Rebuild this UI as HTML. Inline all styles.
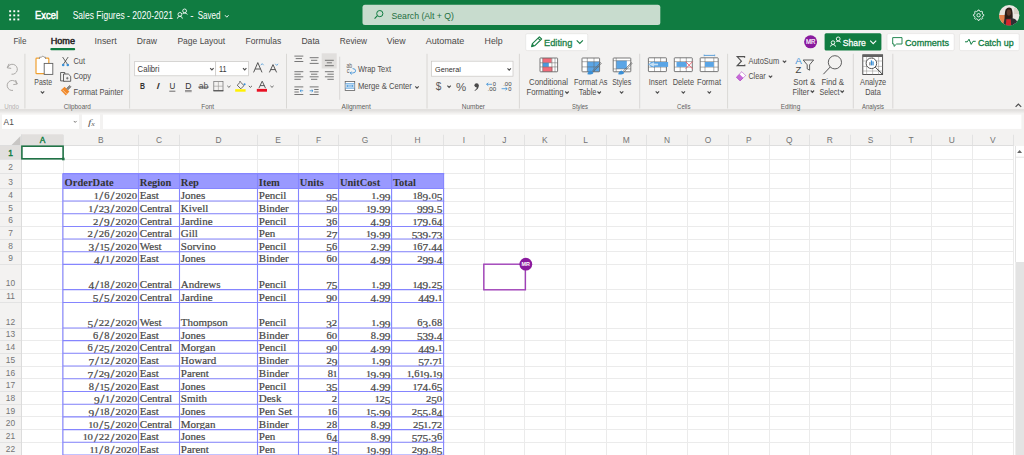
<!DOCTYPE html>
<html><head><meta charset="utf-8"><title>Sales Figures - 2020-2021 - Excel</title>
<style>
html,body{margin:0;padding:0;width:1024px;height:455px;overflow:hidden;background:#f3f2f1;font-family:"Liberation Sans",sans-serif;}
svg{display:block;}
</style></head><body>
<svg width="1024" height="455" viewBox="0 0 1024 455"><rect x="0" y="0" width="1024" height="455" fill="#f3f2f1"/>
<rect x="0" y="0" width="1024" height="30" fill="#107c41"/>
<rect x="9.2" y="10.3" width="1.9" height="1.9" fill="#ffffff"/>
<rect x="9.2" y="14.4" width="1.9" height="1.9" fill="#ffffff"/>
<rect x="9.2" y="18.5" width="1.9" height="1.9" fill="#ffffff"/>
<rect x="13.299999999999999" y="10.3" width="1.9" height="1.9" fill="#ffffff"/>
<rect x="13.299999999999999" y="14.4" width="1.9" height="1.9" fill="#ffffff"/>
<rect x="13.299999999999999" y="18.5" width="1.9" height="1.9" fill="#ffffff"/>
<rect x="17.4" y="10.3" width="1.9" height="1.9" fill="#ffffff"/>
<rect x="17.4" y="14.4" width="1.9" height="1.9" fill="#ffffff"/>
<rect x="17.4" y="18.5" width="1.9" height="1.9" fill="#ffffff"/>
<text x="35.00" y="19.30" font-family="Liberation Sans" font-size="10.6" fill="#ffffff" font-weight="normal" text-anchor="start" textLength="23.00" lengthAdjust="spacingAndGlyphs" stroke="#ffffff" stroke-width="0.5">Excel</text>
<text x="72.70" y="19.00" font-family="Liberation Sans" font-size="10.2" fill="#ffffff" font-weight="normal" text-anchor="start" textLength="100.20" lengthAdjust="spacingAndGlyphs">Sales Figures - 2020-2021</text>
<g fill="none" stroke="#ffffff" stroke-width="0.85"><circle cx="179.9" cy="14.4" r="1.9"/><path d="M177.4 18.6 Q177.6 16.3 179.9 16.3 Q182.2 16.3 182.4 18.6"/><circle cx="184.6" cy="10.9" r="1.9"/><path d="M182.6 13.5 Q184.6 12.6 186.6 13.5 L187.3 14.6"/></g>
<text x="190.20" y="19.00" font-family="Liberation Sans" font-size="10.2" fill="#ffffff" font-weight="normal" text-anchor="start" textLength="3.30" lengthAdjust="spacingAndGlyphs">-</text>
<text x="197.70" y="19.00" font-family="Liberation Sans" font-size="10.2" fill="#ffffff" font-weight="normal" text-anchor="start" textLength="22.80" lengthAdjust="spacingAndGlyphs">Saved</text>
<path d="M225.00 15.20 L226.80 17.20 L228.60 15.20" stroke="#ffffff" fill="none" stroke-width="0.9"/>
<rect x="362.5" y="4.7" width="297.8" height="20.3" rx="2.5" fill="#c8dcce"/>
<path d="M377.2 15.8 L374.6 18.6" stroke="#107c41" fill="none" stroke-width="1.1"/>
<circle cx="379.8" cy="13.6" r="3.1" stroke="#107c41" stroke-width="1" fill="none"/>
<text x="391.50" y="19.20" font-family="Liberation Sans" font-size="9.6" fill="#1e6e3e" font-weight="normal" text-anchor="start" textLength="62.50" lengthAdjust="spacingAndGlyphs">Search (Alt + Q)</text>
<path d="M977.62 11.12 L978.03 10.03 L979.17 10.03 L979.58 11.12 L980.79 11.62 L981.85 11.14 L982.66 11.95 L982.18 13.01 L982.68 14.22 L983.77 14.63 L983.77 15.77 L982.68 16.18 L982.18 17.39 L982.66 18.45 L981.85 19.26 L980.79 18.78 L979.58 19.28 L979.17 20.37 L978.03 20.37 L977.62 19.28 L976.41 18.78 L975.35 19.26 L974.54 18.45 L975.02 17.39 L974.52 16.18 L973.43 15.77 L973.43 14.63 L974.52 14.22 L975.02 13.01 L974.54 11.95 L975.35 11.14 L976.41 11.62 Z" stroke="#ffffff" fill="none" stroke-width="0.85" stroke-linejoin="round"/>
<circle cx="978.6" cy="15.2" r="1.7" fill="none" stroke="#ffffff" stroke-width="0.85"/>
<clipPath id="av"><circle cx="1009.2" cy="15.2" r="10.2"/></clipPath>
<g clip-path="url(#av)"><rect x="998" y="4" width="23" height="23" fill="#e9e6e2"/><rect x="998" y="15" width="7" height="12" fill="#e3834f"/><rect x="1014" y="8" width="7" height="6" fill="#d8d2c8"/><path d="M1004.6 24 Q1004.2 14 1005.6 9.6 Q1008.4 6.2 1011.6 8.6 Q1013 12 1012.6 19 Z" fill="#2a1c17"/><ellipse cx="1008.8" cy="12.6" rx="2.1" ry="3.1" fill="#5e3a2c"/><path d="M1002.5 27 L1004.5 19.6 Q1008.5 17.6 1013.5 18.4 Q1017.5 19.4 1019 27 Z" fill="#2e3034"/><path d="M1005.6 27 L1006.4 19.2 L1010.8 19.2 L1011.2 27 Z" fill="#d3282e"/></g>
<text x="13.40" y="44.30" font-family="Liberation Sans" font-size="8.8" fill="#4a4948" font-weight="normal" text-anchor="start" textLength="13.00" lengthAdjust="spacingAndGlyphs">File</text>
<text x="50.70" y="44.30" font-family="Liberation Sans" font-size="8.8" fill="#252423" font-weight="normal" text-anchor="start" textLength="24.30" lengthAdjust="spacingAndGlyphs" stroke="#252423" stroke-width="0.45">Home</text>
<text x="94.60" y="44.30" font-family="Liberation Sans" font-size="8.8" fill="#4a4948" font-weight="normal" text-anchor="start" textLength="22.00" lengthAdjust="spacingAndGlyphs">Insert</text>
<text x="136.80" y="44.30" font-family="Liberation Sans" font-size="8.8" fill="#4a4948" font-weight="normal" text-anchor="start" textLength="20.10" lengthAdjust="spacingAndGlyphs">Draw</text>
<text x="177.40" y="44.30" font-family="Liberation Sans" font-size="8.8" fill="#4a4948" font-weight="normal" text-anchor="start" textLength="47.80" lengthAdjust="spacingAndGlyphs">Page Layout</text>
<text x="245.60" y="44.30" font-family="Liberation Sans" font-size="8.8" fill="#4a4948" font-weight="normal" text-anchor="start" textLength="35.60" lengthAdjust="spacingAndGlyphs">Formulas</text>
<text x="301.40" y="44.30" font-family="Liberation Sans" font-size="8.8" fill="#4a4948" font-weight="normal" text-anchor="start" textLength="18.20" lengthAdjust="spacingAndGlyphs">Data</text>
<text x="339.80" y="44.30" font-family="Liberation Sans" font-size="8.8" fill="#4a4948" font-weight="normal" text-anchor="start" textLength="27.20" lengthAdjust="spacingAndGlyphs">Review</text>
<text x="386.70" y="44.30" font-family="Liberation Sans" font-size="8.8" fill="#4a4948" font-weight="normal" text-anchor="start" textLength="18.90" lengthAdjust="spacingAndGlyphs">View</text>
<text x="425.70" y="44.30" font-family="Liberation Sans" font-size="8.8" fill="#4a4948" font-weight="normal" text-anchor="start" textLength="38.70" lengthAdjust="spacingAndGlyphs">Automate</text>
<text x="484.60" y="44.30" font-family="Liberation Sans" font-size="8.8" fill="#4a4948" font-weight="normal" text-anchor="start" textLength="18.00" lengthAdjust="spacingAndGlyphs">Help</text>
<rect x="50.3" y="48.1" width="24.9" height="2.2" rx="1.1" fill="#107c41"/>
<rect x="525.7" y="33.7" width="62" height="16.9" rx="1.5" fill="#ffffff" stroke="#e1dfdd" stroke-width="0.6"/>
<path d="M531.6 46.6 L532.4 43.6 L539.4 36.8 L541.6 39 L534.6 45.8 Z M538 38.2 L540.2 40.4" stroke="#1a7f47" fill="none" stroke-width="1.15" stroke-linejoin="round"/>
<path d="M531.6 46.6 L532.4 43.6 L534.6 45.8 Z" stroke="none" fill="#1a7f47" stroke-width="1"/>
<text x="544.00" y="45.50" font-family="Liberation Sans" font-size="9.4" fill="#1a7f47" font-weight="normal" text-anchor="start" textLength="28.40" lengthAdjust="spacingAndGlyphs" stroke="#1a7f47" stroke-width="0.3">Editing</text>
<path d="M576.70 40.30 L579.80 43.50 L582.90 40.30" stroke="#1a7f47" fill="none" stroke-width="1.15"/>
<circle cx="810.6" cy="41.8" r="6.5" fill="#8a1a9e"/>
<text x="810.60" y="44.20" font-family="Liberation Sans" font-size="6.6" fill="#ffffff" font-weight="normal" text-anchor="middle" textLength="9.40" lengthAdjust="spacingAndGlyphs" stroke="#ffffff" stroke-width="0.2">MR</text>
<rect x="824.6" y="33.2" width="56.8" height="17.4" rx="1.5" fill="#107c41"/>
<g fill="none" stroke="#ffffff" stroke-width="0.9"><circle cx="833" cy="42.6" r="1.8"/><path d="M830.4 46.6 Q830.8 44.5 833 44.5 Q835.2 44.5 835.6 46.6"/><circle cx="838.2" cy="38.9" r="1.9"/><path d="M836.3 41.5 Q838.2 40.8 840.1 41.5 L840.6 42.5"/></g>
<text x="842.80" y="45.80" font-family="Liberation Sans" font-size="9.3" fill="#ffffff" font-weight="normal" text-anchor="start" textLength="23.00" lengthAdjust="spacingAndGlyphs" stroke="#ffffff" stroke-width="0.3">Share</text>
<path d="M870.20 40.55 L873.20 43.65 L876.20 40.55" stroke="#ffffff" fill="none" stroke-width="1.1"/>
<rect x="887" y="33.6" width="67.2" height="17" rx="1.5" fill="#ffffff" stroke="#e1dfdd" stroke-width="0.6"/>
<path d="M892.7 37.6 L902 37.6 L902 44 L896.6 44 L894 46.4 L894 44 L892.7 44 Z" stroke="#107c41" fill="none" stroke-width="0.9"/>
<text x="905.00" y="45.60" font-family="Liberation Sans" font-size="9.3" fill="#107c41" font-weight="normal" text-anchor="start" textLength="44.00" lengthAdjust="spacingAndGlyphs" stroke="#107c41" stroke-width="0.3">Comments</text>
<rect x="959.5" y="33.6" width="59.7" height="17" rx="1.5" fill="#ffffff" stroke="#e1dfdd" stroke-width="0.6"/>
<path d="M965 41.8 L967.3 41.8 L969 39.2 L971.2 44.4 L973 41.3 L975.7 41.3" stroke="#107c41" fill="none" stroke-width="1"/>
<text x="978.00" y="45.60" font-family="Liberation Sans" font-size="9.3" fill="#107c41" font-weight="normal" text-anchor="start" textLength="35.60" lengthAdjust="spacingAndGlyphs" stroke="#107c41" stroke-width="0.3">Catch up</text>
<line x1="24.9" y1="53.8" x2="24.9" y2="108.5" stroke="#d2d0ce" stroke-width="0.8"/>
<line x1="129.6" y1="53.8" x2="129.6" y2="108.5" stroke="#d2d0ce" stroke-width="0.8"/>
<line x1="286.5" y1="53.8" x2="286.5" y2="108.5" stroke="#d2d0ce" stroke-width="0.8"/>
<line x1="427" y1="53.8" x2="427" y2="108.5" stroke="#d2d0ce" stroke-width="0.8"/>
<line x1="519.4" y1="53.8" x2="519.4" y2="108.5" stroke="#d2d0ce" stroke-width="0.8"/>
<line x1="639.7" y1="53.8" x2="639.7" y2="108.5" stroke="#d2d0ce" stroke-width="0.8"/>
<line x1="727.6" y1="53.8" x2="727.6" y2="108.5" stroke="#d2d0ce" stroke-width="0.8"/>
<line x1="853.3" y1="53.8" x2="853.3" y2="108.5" stroke="#d2d0ce" stroke-width="0.8"/>
<line x1="892.8" y1="53.8" x2="892.8" y2="108.5" stroke="#d2d0ce" stroke-width="0.8"/>
<line x1="339.7" y1="56.7" x2="339.7" y2="99.7" stroke="#d2d0ce" stroke-width="0.8"/>
<defs><linearGradient id="sh" x1="0" y1="0" x2="0" y2="1"><stop offset="0" stop-color="#dcdad8"/><stop offset="1" stop-color="#f3f2f1"/></linearGradient></defs>
<rect x="0" y="109.2" width="1024" height="4.4" fill="url(#sh)"/>
<text x="63.70" y="108.60" font-family="Liberation Sans" font-size="6.8" fill="#605e5c" font-weight="normal" text-anchor="start" textLength="27.10" lengthAdjust="spacingAndGlyphs">Clipboard</text>
<text x="201.30" y="108.60" font-family="Liberation Sans" font-size="6.8" fill="#605e5c" font-weight="normal" text-anchor="start" textLength="12.70" lengthAdjust="spacingAndGlyphs">Font</text>
<text x="341.60" y="108.60" font-family="Liberation Sans" font-size="6.8" fill="#605e5c" font-weight="normal" text-anchor="start" textLength="29.20" lengthAdjust="spacingAndGlyphs">Alignment</text>
<text x="461.70" y="108.60" font-family="Liberation Sans" font-size="6.8" fill="#605e5c" font-weight="normal" text-anchor="start" textLength="23.30" lengthAdjust="spacingAndGlyphs">Number</text>
<text x="572.00" y="108.60" font-family="Liberation Sans" font-size="6.8" fill="#605e5c" font-weight="normal" text-anchor="start" textLength="16.00" lengthAdjust="spacingAndGlyphs">Styles</text>
<text x="677.00" y="108.60" font-family="Liberation Sans" font-size="6.8" fill="#605e5c" font-weight="normal" text-anchor="start" textLength="13.50" lengthAdjust="spacingAndGlyphs">Cells</text>
<text x="780.70" y="108.60" font-family="Liberation Sans" font-size="6.8" fill="#605e5c" font-weight="normal" text-anchor="start" textLength="19.50" lengthAdjust="spacingAndGlyphs">Editing</text>
<text x="862.00" y="108.60" font-family="Liberation Sans" font-size="6.8" fill="#605e5c" font-weight="normal" text-anchor="start" textLength="22.00" lengthAdjust="spacingAndGlyphs">Analysis</text>
<text x="4.20" y="108.60" font-family="Liberation Sans" font-size="6.8" fill="#b5b3b1" font-weight="normal" text-anchor="start" textLength="14.80" lengthAdjust="spacingAndGlyphs">Undo</text>
<path d="M9 63.8 L7.2 67.8 L11.2 68.4 M7.6 67.6 A5 5 0 1 1 11.5 74.2" stroke="#a19f9d" fill="none" stroke-width="0.9"/>
<path d="M15.5 80 L17.3 84 L13.3 84.6 M16.9 83.8 A5 5 0 1 0 13 90.4" stroke="#a19f9d" fill="none" stroke-width="0.9"/>
<rect x="36" y="58.2" width="12.8" height="15.5" rx="0.8" fill="#ffffff" stroke="#f0a030" stroke-width="1.2"/>
<path d="M39.5 59 L39.5 57.2 L41.5 57.2 A1.3 1.3 0 0 1 44 57.2 L45.5 57.2 L45.5 59" stroke="#8a8886" fill="#ffffff" stroke-width="0.8"/>
<rect x="44.2" y="63.4" width="8.6" height="11" fill="#ffffff" stroke="#616161" stroke-width="0.9"/>
<text x="34.30" y="84.50" font-family="Liberation Sans" font-size="8.4" fill="#504e4c" font-weight="normal" text-anchor="start" textLength="17.70" lengthAdjust="spacingAndGlyphs">Paste</text>
<path d="M40.80 91.30 L42.50 93.10 L44.20 91.30" stroke="#505050" fill="none" stroke-width="1.15"/>
<path d="M62.6 57 L67.4 64.2 M68.2 57 L63.4 64.2" stroke="#424242" fill="none" stroke-width="0.8"/>
<circle cx="63.2" cy="65" r="1.3" fill="#3a8fd6"/><circle cx="67.8" cy="65" r="1.3" fill="#3a8fd6"/>
<text x="73.40" y="63.90" font-family="Liberation Sans" font-size="8.4" fill="#504e4c" font-weight="normal" text-anchor="start" textLength="11.60" lengthAdjust="spacingAndGlyphs">Cut</text>
<path d="M60.6 72.5 L64.8 72.5 L64.8 80.9 L60.6 80.9 Z" stroke="#424242" fill="none" stroke-width="0.8"/>
<path d="M63.5 74 L68.3 74 L70.7 76.3 L70.7 81.3 L63.5 81.3 Z" stroke="#424242" fill="#f3f2f1" stroke-width="0.8"/>
<path d="M66 78.2 L68.6 78.2 M67.3 76.9 L67.3 79.5" stroke="#424242" fill="none" stroke-width="0.6"/>
<text x="73.40" y="79.00" font-family="Liberation Sans" font-size="8.4" fill="#504e4c" font-weight="normal" text-anchor="start" textLength="17.60" lengthAdjust="spacingAndGlyphs">Copy</text>
<path d="M60.8 90.2 L64.6 86.8 L69.4 91.4 L65.8 95.6 Z" stroke="none" fill="#f0892b" stroke-width="1"/>
<path d="M62.6 89.8 L66.6 93.8" stroke="#fbd3a8" fill="none" stroke-width="0.8"/>
<path d="M66.4 88.6 L69.6 85.4 L71 86.8 L67.8 90" stroke="#616161" fill="#8a8886" stroke-width="0.6"/>
<text x="73.60" y="94.50" font-family="Liberation Sans" font-size="8.4" fill="#504e4c" font-weight="normal" text-anchor="start" textLength="49.60" lengthAdjust="spacingAndGlyphs">Format Painter</text>
<rect x="134.7" y="61.5" width="81" height="14.3" fill="#ffffff" stroke="#c8c6c4" stroke-width="0.7"/>
<rect x="215.7" y="61.5" width="32.8" height="14.3" fill="#ffffff" stroke="#c8c6c4" stroke-width="0.7"/>
<text x="137.60" y="72.20" font-family="Liberation Sans" font-size="8.4" fill="#3c3b3a" font-weight="normal" text-anchor="start" textLength="21.80" lengthAdjust="spacingAndGlyphs">Calibri</text>
<path d="M210.20 68.10 L211.90 69.90 L213.60 68.10" stroke="#505050" fill="none" stroke-width="1.15"/>
<text x="218.90" y="72.20" font-family="Liberation Sans" font-size="8.4" fill="#3c3b3a" font-weight="normal" text-anchor="start" textLength="7.60" lengthAdjust="spacingAndGlyphs">11</text>
<path d="M243.00 68.10 L244.70 69.90 L246.40 68.10" stroke="#505050" fill="none" stroke-width="1.15"/>
<path d="M253.6 72.4 L257.8 62.6 L262 72.4 M255.2 69 L260.4 69" stroke="#424242" fill="none" stroke-width="0.9"/>
<path d="M260.8 65.2 L262.2 63.6 L263.6 65.2" stroke="#3a8fd6" fill="none" stroke-width="0.7"/>
<path d="M269.4 72.4 L273 64.6 L276.6 72.4 M270.7 69.6 L275.3 69.6" stroke="#424242" fill="none" stroke-width="0.9"/>
<path d="M275.3 63.8 L276.7 65.4 L278.1 63.8" stroke="#3a8fd6" fill="none" stroke-width="0.7"/>
<text x="140.00" y="88.80" font-family="Liberation Sans" font-size="8.6" fill="#323130" font-weight="bold" text-anchor="start" textLength="5.00" lengthAdjust="spacingAndGlyphs">B</text>
<text x="156.30" y="88.80" font-family="Liberation Sans" font-size="8.6" fill="#323130" font-weight="normal" text-anchor="start" textLength="3.70" lengthAdjust="spacingAndGlyphs" font-style="italic">I</text>
<text x="169.50" y="88.80" font-family="Liberation Sans" font-size="8.6" fill="#323130" font-weight="normal" text-anchor="start" textLength="5.80" lengthAdjust="spacingAndGlyphs">U</text>
<line x1="169.3" y1="91.2" x2="175.4" y2="91.2" stroke="#323130" stroke-width="0.7"/>
<text x="185.30" y="88.80" font-family="Liberation Sans" font-size="8.6" fill="#323130" font-weight="normal" text-anchor="start" textLength="6.20" lengthAdjust="spacingAndGlyphs">D</text>
<line x1="185" y1="90.5" x2="191.7" y2="90.5" stroke="#323130" stroke-width="0.5"/>
<line x1="185" y1="91.7" x2="191.7" y2="91.7" stroke="#323130" stroke-width="0.5"/>
<text x="198.80" y="89.40" font-family="Liberation Sans" font-size="8.2" fill="#555555" font-weight="normal" text-anchor="start" textLength="9.60" lengthAdjust="spacingAndGlyphs">ab</text>
<line x1="198.2" y1="87.1" x2="208.7" y2="87.1" stroke="#424242" stroke-width="0.8"/>
<rect x="213.8" y="81.6" width="9.2" height="9.2" fill="none" stroke="#6e6e6e" stroke-width="0.7"/>
<line x1="218.4" y1="81.6" x2="218.4" y2="90.8" stroke="#9a9896" stroke-width="0.6"/>
<line x1="213.8" y1="86.2" x2="223" y2="86.2" stroke="#9a9896" stroke-width="0.6"/>
<line x1="213.4" y1="90.8" x2="223.4" y2="90.8" stroke="#424242" stroke-width="1.0"/>
<path d="M227.30 85.85 L228.90 87.35 L230.50 85.85" stroke="#424242" fill="none" stroke-width="0.8"/>
<path d="M237.2 85.2 L240.4 82 L244 85.6 L240.8 88.8 Z M240.4 82 L239.4 81" stroke="#424242" fill="none" stroke-width="0.8"/>
<circle cx="244.6" cy="84.3" r="1" fill="#3a8fd6"/>
<rect x="235.2" y="89.2" width="10.4" height="2.5" fill="#fff100"/>
<path d="M248.80 85.85 L250.40 87.35 L252.00 85.85" stroke="#424242" fill="none" stroke-width="0.8"/>
<path d="M258.9 88.2 L262.2 81.2 L265.5 88.2 M260 85.6 L264.4 85.6" stroke="#424242" fill="none" stroke-width="0.85"/>
<rect x="256.8" y="88.9" width="10.2" height="2.8" fill="#e81123"/>
<path d="M270.40 85.85 L272.00 87.35 L273.60 85.85" stroke="#424242" fill="none" stroke-width="0.8"/>
<rect x="321.7" y="53.3" width="15" height="15.2" fill="#e1dfdd"/>
<line x1="294.4" y1="56.1" x2="303.3" y2="56.1" stroke="#616161" stroke-width="0.85"/>
<line x1="295.7" y1="58.6" x2="302" y2="58.6" stroke="#616161" stroke-width="0.85"/>
<line x1="294.4" y1="61.5" x2="303.3" y2="61.5" stroke="#616161" stroke-width="0.85"/>
<line x1="309.7" y1="57.7" x2="318.6" y2="57.7" stroke="#616161" stroke-width="0.85"/>
<line x1="311" y1="60.3" x2="317.3" y2="60.3" stroke="#616161" stroke-width="0.85"/>
<line x1="309.7" y1="63.4" x2="318.6" y2="63.4" stroke="#616161" stroke-width="0.85"/>
<line x1="324.9" y1="60.3" x2="333.8" y2="60.3" stroke="#616161" stroke-width="0.85"/>
<line x1="326.8" y1="62.8" x2="331.9" y2="62.8" stroke="#616161" stroke-width="0.85"/>
<line x1="324.9" y1="65.7" x2="333.8" y2="65.7" stroke="#616161" stroke-width="0.85"/>
<line x1="294.4" y1="71.7" x2="303.3" y2="71.7" stroke="#616161" stroke-width="0.85"/>
<line x1="309.7" y1="71.7" x2="318.6" y2="71.7" stroke="#616161" stroke-width="0.85"/>
<line x1="324.9" y1="71.7" x2="333.8" y2="71.7" stroke="#616161" stroke-width="0.85"/>
<line x1="294.4" y1="74.2" x2="300.8" y2="74.2" stroke="#616161" stroke-width="0.85"/>
<line x1="311" y1="74.2" x2="317.3" y2="74.2" stroke="#616161" stroke-width="0.85"/>
<line x1="327.4" y1="74.2" x2="333.8" y2="74.2" stroke="#616161" stroke-width="0.85"/>
<line x1="294.4" y1="76.8" x2="303.3" y2="76.8" stroke="#616161" stroke-width="0.85"/>
<line x1="309.7" y1="76.8" x2="318.6" y2="76.8" stroke="#616161" stroke-width="0.85"/>
<line x1="324.9" y1="76.8" x2="333.8" y2="76.8" stroke="#616161" stroke-width="0.85"/>
<line x1="294.4" y1="79.3" x2="300.8" y2="79.3" stroke="#616161" stroke-width="0.85"/>
<line x1="311" y1="79.3" x2="317.3" y2="79.3" stroke="#616161" stroke-width="0.85"/>
<line x1="327.4" y1="79.3" x2="333.8" y2="79.3" stroke="#616161" stroke-width="0.85"/>
<line x1="294.4" y1="86.9" x2="303.3" y2="86.9" stroke="#616161" stroke-width="0.85"/>
<line x1="294.4" y1="89.5" x2="298.8" y2="89.5" stroke="#616161" stroke-width="0.85"/>
<line x1="294.4" y1="92" x2="298.8" y2="92" stroke="#616161" stroke-width="0.85"/>
<line x1="294.4" y1="94.5" x2="303.3" y2="94.5" stroke="#616161" stroke-width="0.85"/>
<path d="M303.2 90.75 L300 90.75 M301.3 89.5 L300 90.75 L301.3 92" stroke="#3a8fd6" fill="none" stroke-width="0.8"/>
<line x1="309.7" y1="86.9" x2="318.6" y2="86.9" stroke="#616161" stroke-width="0.85"/>
<line x1="314.2" y1="89.5" x2="318.6" y2="89.5" stroke="#616161" stroke-width="0.85"/>
<line x1="314.2" y1="92" x2="318.6" y2="92" stroke="#616161" stroke-width="0.85"/>
<line x1="309.7" y1="94.5" x2="318.6" y2="94.5" stroke="#616161" stroke-width="0.85"/>
<path d="M309.7 90.75 L313 90.75 M311.7 89.5 L313 90.75 L311.7 92" stroke="#3a8fd6" fill="none" stroke-width="0.8"/>
<text x="346.40" y="67.80" font-family="Liberation Sans" font-size="6.4" fill="#616161" font-weight="normal" text-anchor="start" textLength="5.60" lengthAdjust="spacingAndGlyphs">ab</text>
<text x="346.80" y="72.60" font-family="Liberation Sans" font-size="6.4" fill="#616161" font-weight="normal" text-anchor="start" textLength="2.80" lengthAdjust="spacingAndGlyphs">c</text>
<path d="M352.6 68.6 Q355.6 68.6 355.6 70.8 Q355.6 73 352.6 73 L350.2 73 M351.6 71.6 L350.2 73 L351.6 74.4" stroke="#3a8fd6" fill="none" stroke-width="0.85"/>
<text x="357.90" y="72.10" font-family="Liberation Sans" font-size="8.4" fill="#504e4c" font-weight="normal" text-anchor="start" textLength="33.10" lengthAdjust="spacingAndGlyphs">Wrap Text</text>
<rect x="345.2" y="81.4" width="9.5" height="9.1" fill="#ffffff" stroke="#616161" stroke-width="0.8"/>
<rect x="345.6" y="83.6" width="8.7" height="4.7" fill="#c7e0f4"/>
<line x1="345.2" y1="83.6" x2="354.7" y2="83.6" stroke="#3a8fd6" stroke-width="0.6"/>
<line x1="345.2" y1="88.3" x2="354.7" y2="88.3" stroke="#3a8fd6" stroke-width="0.6"/>
<path d="M346.8 85.95 L353.1 85.95 M348 85 L346.8 85.95 L348 86.9 M351.9 85 L353.1 85.95 L351.9 86.9" stroke="#3a8fd6" fill="none" stroke-width="0.6"/>
<text x="357.90" y="89.00" font-family="Liberation Sans" font-size="8.4" fill="#504e4c" font-weight="normal" text-anchor="start" textLength="54.00" lengthAdjust="spacingAndGlyphs">Merge &amp; Center</text>
<path d="M415.30 86.40 L417.00 88.20 L418.70 86.40" stroke="#505050" fill="none" stroke-width="1.15"/>
<rect x="431.5" y="61.2" width="81.5" height="15" fill="#ffffff" stroke="#c8c6c4" stroke-width="0.7"/>
<text x="435.00" y="71.70" font-family="Liberation Sans" font-size="7.8" fill="#323130" font-weight="normal" text-anchor="start" textLength="25.80" lengthAdjust="spacingAndGlyphs">General</text>
<path d="M507.50 68.30 L509.20 70.10 L510.90 68.30" stroke="#505050" fill="none" stroke-width="1.15"/>
<text x="435.80" y="90.20" font-family="Liberation Sans" font-size="10.6" fill="#5a5a5a" font-weight="normal" text-anchor="start" textLength="5.60" lengthAdjust="spacingAndGlyphs">$</text>
<path d="M447.40 85.60 L449.10 87.40 L450.80 85.60" stroke="#505050" fill="none" stroke-width="1.15"/>
<text x="455.90" y="90.60" font-family="Liberation Sans" font-size="10.4" fill="#5a5a5a" font-weight="normal" text-anchor="start" textLength="10.20" lengthAdjust="spacingAndGlyphs">%</text>
<circle cx="476.6" cy="85.3" r="2.15" fill="#4a4a4a"/>
<path d="M478.7 85.6 Q478.8 89.2 474.9 90.9 L474.6 90.2 Q476.8 89 476.9 87.2 Z" stroke="none" fill="#4a4a4a" stroke-width="1"/>
<text x="492.70" y="85.80" font-family="Liberation Sans" font-size="5.8" fill="#424242" font-weight="normal" text-anchor="start" textLength="3.20" lengthAdjust="spacingAndGlyphs">0</text>
<text x="487.60" y="90.60" font-family="Liberation Sans" font-size="5.8" fill="#424242" font-weight="normal" text-anchor="start" textLength="8.60" lengthAdjust="spacingAndGlyphs">.00</text>
<path d="M492 84.3 L486.6 84.3 M488.3 82.8 L486.6 84.3 L488.3 85.8" stroke="#3a8fd6" fill="none" stroke-width="0.8"/>
<text x="503.20" y="85.80" font-family="Liberation Sans" font-size="5.8" fill="#424242" font-weight="normal" text-anchor="start" textLength="8.40" lengthAdjust="spacingAndGlyphs">.00</text>
<text x="508.30" y="90.60" font-family="Liberation Sans" font-size="5.8" fill="#424242" font-weight="normal" text-anchor="start" textLength="3.20" lengthAdjust="spacingAndGlyphs">0</text>
<path d="M501.6 88.7 L507.2 88.7 M505.5 87.2 L507.2 88.7 L505.5 90.2" stroke="#3a8fd6" fill="none" stroke-width="0.8"/>
<rect x="540" y="58" width="17.6" height="13.8" rx="0.6" fill="#ffffff"/>
<rect x="542.7" y="58" width="8.9" height="4.8" fill="#f26b7a"/>
<rect x="542.7" y="62.8" width="6.1" height="4.1" fill="#4a9be0"/>
<rect x="542.7" y="66.9" width="9.7" height="4.9" fill="#f26b7a"/>
<rect x="540" y="58" width="17.6" height="13.8" rx="0.6" fill="none" stroke="#616161" stroke-width="0.85"/>
<line x1="540" y1="62.8" x2="557.6" y2="62.8" stroke="#616161" stroke-width="0.5"/>
<line x1="540" y1="66.9" x2="557.6" y2="66.9" stroke="#616161" stroke-width="0.5"/>
<line x1="542.7" y1="58" x2="542.7" y2="71.8" stroke="#616161" stroke-width="0.5"/>
<line x1="551.9" y1="58" x2="551.9" y2="71.8" stroke="#616161" stroke-width="0.5"/>
<line x1="555" y1="58" x2="555" y2="71.8" stroke="#616161" stroke-width="0.5"/>
<text x="529.00" y="84.80" font-family="Liberation Sans" font-size="8.4" fill="#504e4c" font-weight="normal" text-anchor="start" textLength="39.00" lengthAdjust="spacingAndGlyphs">Conditional</text>
<text x="526.50" y="94.80" font-family="Liberation Sans" font-size="8.4" fill="#504e4c" font-weight="normal" text-anchor="start" textLength="37.00" lengthAdjust="spacingAndGlyphs">Formatting</text>
<path d="M565.30 91.50 L567.00 93.30 L568.70 91.50" stroke="#505050" fill="none" stroke-width="1.15"/>
<rect x="582" y="58" width="17.6" height="13.8" rx="0.6" fill="#ffffff"/>
<rect x="587.3" y="61.7" width="12.3" height="10.1" fill="#5aa5e6"/>
<rect x="582" y="58" width="17.6" height="13.8" rx="0.6" fill="none" stroke="#616161" stroke-width="0.85"/>
<line x1="582" y1="61.7" x2="599.6" y2="61.7" stroke="#616161" stroke-width="0.5"/>
<line x1="582" y1="66.9" x2="599.6" y2="66.9" stroke="#616161" stroke-width="0.5"/>
<line x1="587.3" y1="58" x2="587.3" y2="71.8" stroke="#616161" stroke-width="0.5"/>
<line x1="594" y1="58" x2="594" y2="71.8" stroke="#616161" stroke-width="0.5"/>
<path d="M600.8 62.2 L592.6 71 M601.6 63 L593.4 71.8" stroke="#616161" fill="none" stroke-width="0.7"/>
<path d="M587.4 74.2 Q588 70.8 590.8 70.4 L593.6 72.8 Q592.6 75.4 587.4 74.2 Z" stroke="none" fill="#3a8fd6" stroke-width="1"/>
<text x="574.00" y="84.80" font-family="Liberation Sans" font-size="8.4" fill="#504e4c" font-weight="normal" text-anchor="start" textLength="33.50" lengthAdjust="spacingAndGlyphs">Format As</text>
<text x="578.80" y="94.80" font-family="Liberation Sans" font-size="8.4" fill="#504e4c" font-weight="normal" text-anchor="start" textLength="17.60" lengthAdjust="spacingAndGlyphs">Table</text>
<path d="M597.50 91.50 L599.20 93.30 L600.90 91.50" stroke="#505050" fill="none" stroke-width="1.15"/>
<rect x="613.2" y="58" width="17.6" height="13.8" rx="0.6" fill="#ffffff"/>
<rect x="616.2" y="60.7" width="10.6" height="8.2" fill="#5aa5e6"/>
<rect x="613.2" y="58" width="17.6" height="13.8" rx="0.6" fill="none" stroke="#616161" stroke-width="0.85"/>
<line x1="613.2" y1="60.7" x2="630.8" y2="60.7" stroke="#616161" stroke-width="0.5"/>
<line x1="616.2" y1="58" x2="616.2" y2="71.8" stroke="#616161" stroke-width="0.5"/>
<line x1="613.2" y1="68.9" x2="630.8" y2="68.9" stroke="#616161" stroke-width="0.5"/>
<path d="M631.6 62.2 L623.4 71 M632.4 63 L624.2 71.8" stroke="#616161" fill="none" stroke-width="0.7"/>
<path d="M618.2 74.2 Q618.8 70.8 621.6 70.4 L624.4 72.8 Q623.4 75.4 618.2 74.2 Z" stroke="none" fill="#3a8fd6" stroke-width="1"/>
<text x="612.20" y="84.80" font-family="Liberation Sans" font-size="8.4" fill="#504e4c" font-weight="normal" text-anchor="start" textLength="19.00" lengthAdjust="spacingAndGlyphs">Styles</text>
<path d="M619.90 91.30 L621.60 93.10 L623.30 91.30" stroke="#505050" fill="none" stroke-width="1.15"/>
<rect x="648.4" y="57.8" width="18" height="13.8" rx="0.6" fill="#ffffff" stroke="#616161" stroke-width="0.85"/>
<line x1="648.4" y1="61.6" x2="666.4" y2="61.6" stroke="#616161" stroke-width="0.5"/>
<line x1="648.4" y1="67.1" x2="666.4" y2="67.1" stroke="#616161" stroke-width="0.5"/>
<line x1="654.5" y1="57.8" x2="654.5" y2="71.6" stroke="#616161" stroke-width="0.5"/>
<line x1="660.6" y1="57.8" x2="660.6" y2="71.6" stroke="#616161" stroke-width="0.5"/>
<rect x="650.5" y="62" width="17.6" height="4.9" fill="#5aa5e6"/>
<path d="M654.3 61.6 L648.2 64.45 L654.3 67.3 L654.3 65.7 L658.5 65.7 L658.5 63.2 L654.3 63.2 Z" stroke="#3a8fd6" fill="#c7e0f4" stroke-width="0.5"/>
<text x="648.80" y="84.80" font-family="Liberation Sans" font-size="8.4" fill="#504e4c" font-weight="normal" text-anchor="start" textLength="18.20" lengthAdjust="spacingAndGlyphs">Insert</text>
<path d="M655.70 91.30 L657.40 93.10 L659.10 91.30" stroke="#505050" fill="none" stroke-width="1.15"/>
<rect x="674.3" y="57.8" width="18" height="13.8" rx="0.6" fill="#ffffff" stroke="#616161" stroke-width="0.85"/>
<line x1="674.3" y1="61.6" x2="692.3" y2="61.6" stroke="#616161" stroke-width="0.5"/>
<line x1="674.3" y1="67.1" x2="692.3" y2="67.1" stroke="#616161" stroke-width="0.5"/>
<line x1="680.2" y1="57.8" x2="680.2" y2="71.6" stroke="#616161" stroke-width="0.5"/>
<line x1="686.3" y1="57.8" x2="686.3" y2="71.6" stroke="#616161" stroke-width="0.5"/>
<rect x="676.5" y="62" width="10.1" height="4.9" fill="#5aa5e6"/>
<path d="M685.6 61.6 L692.6 68.8 M692.6 61.6 L685.6 68.8" stroke="#ee5b6b" fill="none" stroke-width="0.9"/>
<text x="672.70" y="84.80" font-family="Liberation Sans" font-size="8.4" fill="#504e4c" font-weight="normal" text-anchor="start" textLength="21.30" lengthAdjust="spacingAndGlyphs">Delete</text>
<path d="M681.60 91.30 L683.30 93.10 L685.00 91.30" stroke="#505050" fill="none" stroke-width="1.15"/>
<rect x="700.2" y="57.8" width="18" height="13.8" rx="0.6" fill="#ffffff" stroke="#616161" stroke-width="0.85"/>
<line x1="700.2" y1="61.6" x2="718.2" y2="61.6" stroke="#616161" stroke-width="0.5"/>
<line x1="700.2" y1="67.1" x2="718.2" y2="67.1" stroke="#616161" stroke-width="0.5"/>
<line x1="705" y1="57.8" x2="705" y2="71.6" stroke="#616161" stroke-width="0.5"/>
<line x1="713.8" y1="57.8" x2="713.8" y2="71.6" stroke="#616161" stroke-width="0.5"/>
<rect x="705" y="62" width="8.8" height="4.9" fill="#5aa5e6"/>
<line x1="704.1" y1="55.4" x2="714.7" y2="55.4" stroke="#3a8fd6" stroke-width="0.8"/>
<line x1="704.1" y1="54.5" x2="704.1" y2="56.3" stroke="#3a8fd6" stroke-width="0.6"/>
<line x1="714.7" y1="54.5" x2="714.7" y2="56.3" stroke="#3a8fd6" stroke-width="0.6"/>
<text x="697.00" y="84.80" font-family="Liberation Sans" font-size="8.4" fill="#504e4c" font-weight="normal" text-anchor="start" textLength="24.00" lengthAdjust="spacingAndGlyphs">Format</text>
<path d="M707.60 91.30 L709.30 93.10 L711.00 91.30" stroke="#505050" fill="none" stroke-width="1.15"/>
<path d="M744.6 57.8 L744.6 56.6 L737.2 56.6 L741.4 61.2 L737.2 65.6 L744.8 65.6 L744.8 64.4" stroke="#505050" fill="none" stroke-width="1.15" stroke-linejoin="miter"/>
<text x="748.40" y="63.50" font-family="Liberation Sans" font-size="8.4" fill="#504e4c" font-weight="normal" text-anchor="start" textLength="30.80" lengthAdjust="spacingAndGlyphs">AutoSum</text>
<path d="M782.80 60.70 L784.50 62.50 L786.20 60.70" stroke="#505050" fill="none" stroke-width="1.15"/>
<path d="M736.4 77.2 L741.9 71.8 L745.6 75.5 L740.1 80.9 Z" stroke="#b04cc4" fill="#c768d8" stroke-width="0.8"/>
<path d="M739.6 74.2 L741.9 71.9 L745.5 75.5 L743.2 77.8 Z" stroke="none" fill="#ffffff" stroke-width="1"/>
<text x="748.40" y="78.50" font-family="Liberation Sans" font-size="8.4" fill="#504e4c" font-weight="normal" text-anchor="start" textLength="17.20" lengthAdjust="spacingAndGlyphs">Clear</text>
<path d="M768.80 75.70 L770.50 77.50 L772.20 75.70" stroke="#505050" fill="none" stroke-width="1.15"/>
<text x="795.20" y="64.00" font-family="Liberation Sans" font-size="9.4" fill="#3a8fd6" font-weight="normal" text-anchor="start" textLength="6.60" lengthAdjust="spacingAndGlyphs">A</text>
<text x="795.40" y="73.20" font-family="Liberation Sans" font-size="9.4" fill="#424242" font-weight="normal" text-anchor="start" textLength="5.80" lengthAdjust="spacingAndGlyphs">Z</text>
<path d="M803.2 60 L813.6 60 L809.6 64.8 L809.6 70.2 L807.2 68.8 L807.2 64.8 Z" stroke="#424242" fill="none" stroke-width="0.85"/>
<text x="793.30" y="84.90" font-family="Liberation Sans" font-size="8.4" fill="#504e4c" font-weight="normal" text-anchor="start" textLength="21.90" lengthAdjust="spacingAndGlyphs">Sort &amp;</text>
<text x="792.50" y="94.70" font-family="Liberation Sans" font-size="8.4" fill="#504e4c" font-weight="normal" text-anchor="start" textLength="16.80" lengthAdjust="spacingAndGlyphs">Filter</text>
<path d="M810.70 90.50 L812.40 92.30 L814.10 90.50" stroke="#505050" fill="none" stroke-width="1.15"/>
<circle cx="834.9" cy="62.3" r="6.6" fill="none" stroke="#424242" stroke-width="0.85"/>
<line x1="830.2" y1="67" x2="823.4" y2="74.2" stroke="#424242" stroke-width="0.9"/>
<text x="821.40" y="84.90" font-family="Liberation Sans" font-size="8.4" fill="#504e4c" font-weight="normal" text-anchor="start" textLength="22.60" lengthAdjust="spacingAndGlyphs">Find &amp;</text>
<text x="819.40" y="94.70" font-family="Liberation Sans" font-size="8.4" fill="#504e4c" font-weight="normal" text-anchor="start" textLength="20.00" lengthAdjust="spacingAndGlyphs">Select</text>
<path d="M840.50 90.50 L842.20 92.30 L843.90 90.50" stroke="#505050" fill="none" stroke-width="1.15"/>
<rect x="862.8" y="54.8" width="19.8" height="19.7" fill="#ffffff" stroke="#424242" stroke-width="0.9"/>
<rect x="862.8" y="54.8" width="19.8" height="2.2" fill="#616161"/>
<line x1="862.8" y1="61" x2="882.6" y2="61" stroke="#8a8886" stroke-width="0.5"/>
<line x1="862.8" y1="66.4" x2="882.6" y2="66.4" stroke="#8a8886" stroke-width="0.5"/>
<line x1="862.8" y1="71" x2="882.6" y2="71" stroke="#8a8886" stroke-width="0.5"/>
<line x1="866.6" y1="57" x2="866.6" y2="74.5" stroke="#8a8886" stroke-width="0.5"/>
<line x1="872.6" y1="57" x2="872.6" y2="74.5" stroke="#8a8886" stroke-width="0.5"/>
<line x1="878.6" y1="57" x2="878.6" y2="74.5" stroke="#8a8886" stroke-width="0.5"/>
<circle cx="871.4" cy="63.3" r="5.3" fill="#ffffff" stroke="#424242" stroke-width="0.9"/>
<line x1="875.2" y1="67.1" x2="882.4" y2="74.2" stroke="#424242" stroke-width="1"/>
<rect x="869.2" y="62.2" width="1.3" height="3.2" fill="#8a8886"/>
<rect x="870.8" y="60.4" width="1.3" height="5" fill="#3a8fd6"/>
<rect x="872.4" y="61.4" width="1.3" height="4" fill="#3a8fd6"/>
<text x="860.00" y="84.90" font-family="Liberation Sans" font-size="8.4" fill="#504e4c" font-weight="normal" text-anchor="start" textLength="26.20" lengthAdjust="spacingAndGlyphs">Analyze</text>
<text x="865.20" y="94.70" font-family="Liberation Sans" font-size="8.4" fill="#504e4c" font-weight="normal" text-anchor="start" textLength="15.60" lengthAdjust="spacingAndGlyphs">Data</text>
<path d="M1015.6 106.9 L1018.4 104 L1021.2 106.9" stroke="#505050" fill="none" stroke-width="1.2"/>
<rect x="2" y="114.6" width="77" height="14.3" fill="#ffffff"/>
<text x="3.60" y="124.80" font-family="Liberation Sans" font-size="8.6" fill="#504e4c" font-weight="normal" text-anchor="start" textLength="10.20" lengthAdjust="spacingAndGlyphs">A1</text>
<path d="M73.80 120.95 L75.20 122.45 L76.60 120.95" stroke="#605e5c" fill="none" stroke-width="0.8"/>
<rect x="82" y="114.6" width="18" height="14.3" fill="#ffffff"/>
<text x="88.00" y="125.00" font-family="Liberation Serif" font-size="9" fill="#605e5c" font-weight="normal" text-anchor="start" textLength="3.50" lengthAdjust="spacingAndGlyphs" font-style="italic">f</text>
<text x="91.20" y="125.60" font-family="Liberation Serif" font-size="7" fill="#605e5c" font-weight="normal" text-anchor="start" textLength="3.50" lengthAdjust="spacingAndGlyphs" font-style="italic">x</text>
<rect x="103" y="114.6" width="918.4" height="14.3" fill="#ffffff"/>
<rect x="22" y="146" width="991.5" height="309" fill="#ffffff"/>
<rect x="0" y="134.3" width="1024" height="11.699999999999989" fill="#f3f2f1"/>
<rect x="0" y="146" width="22" height="309" fill="#f3f2f1"/>
<rect x="22" y="134.3" width="41" height="11.699999999999989" fill="#e1dfdd"/>
<rect x="0" y="146" width="22" height="13.4" fill="#e1dfdd"/>
<path d="M20.5 136 L20.5 145 L11.6 145 Z" stroke="none" fill="#c8c6c4" stroke-width="1"/>
<line x1="22" y1="159.5" x2="1013.5" y2="159.5" stroke="#ebebeb" stroke-width="1"/>
<line x1="0" y1="159.5" x2="22" y2="159.5" stroke="#e3e3e3" stroke-width="1"/>
<line x1="22" y1="173.5" x2="1013.5" y2="173.5" stroke="#ebebeb" stroke-width="1"/>
<line x1="0" y1="173.5" x2="22" y2="173.5" stroke="#e3e3e3" stroke-width="1"/>
<line x1="22" y1="188.5" x2="1013.5" y2="188.5" stroke="#ebebeb" stroke-width="1"/>
<line x1="0" y1="188.5" x2="22" y2="188.5" stroke="#e3e3e3" stroke-width="1"/>
<line x1="22" y1="201.5" x2="1013.5" y2="201.5" stroke="#ebebeb" stroke-width="1"/>
<line x1="0" y1="201.5" x2="22" y2="201.5" stroke="#e3e3e3" stroke-width="1"/>
<line x1="22" y1="213.5" x2="1013.5" y2="213.5" stroke="#ebebeb" stroke-width="1"/>
<line x1="0" y1="213.5" x2="22" y2="213.5" stroke="#e3e3e3" stroke-width="1"/>
<line x1="22" y1="226.5" x2="1013.5" y2="226.5" stroke="#ebebeb" stroke-width="1"/>
<line x1="0" y1="226.5" x2="22" y2="226.5" stroke="#e3e3e3" stroke-width="1"/>
<line x1="22" y1="239.5" x2="1013.5" y2="239.5" stroke="#ebebeb" stroke-width="1"/>
<line x1="0" y1="239.5" x2="22" y2="239.5" stroke="#e3e3e3" stroke-width="1"/>
<line x1="22" y1="251.5" x2="1013.5" y2="251.5" stroke="#ebebeb" stroke-width="1"/>
<line x1="0" y1="251.5" x2="22" y2="251.5" stroke="#e3e3e3" stroke-width="1"/>
<line x1="22" y1="264.5" x2="1013.5" y2="264.5" stroke="#ebebeb" stroke-width="1"/>
<line x1="0" y1="264.5" x2="22" y2="264.5" stroke="#e3e3e3" stroke-width="1"/>
<line x1="22" y1="289.5" x2="1013.5" y2="289.5" stroke="#ebebeb" stroke-width="1"/>
<line x1="0" y1="289.5" x2="22" y2="289.5" stroke="#e3e3e3" stroke-width="1"/>
<line x1="22" y1="302.5" x2="1013.5" y2="302.5" stroke="#ebebeb" stroke-width="1"/>
<line x1="0" y1="302.5" x2="22" y2="302.5" stroke="#e3e3e3" stroke-width="1"/>
<line x1="22" y1="328.5" x2="1013.5" y2="328.5" stroke="#ebebeb" stroke-width="1"/>
<line x1="0" y1="328.5" x2="22" y2="328.5" stroke="#e3e3e3" stroke-width="1"/>
<line x1="22" y1="340.5" x2="1013.5" y2="340.5" stroke="#ebebeb" stroke-width="1"/>
<line x1="0" y1="340.5" x2="22" y2="340.5" stroke="#e3e3e3" stroke-width="1"/>
<line x1="22" y1="353.5" x2="1013.5" y2="353.5" stroke="#ebebeb" stroke-width="1"/>
<line x1="0" y1="353.5" x2="22" y2="353.5" stroke="#e3e3e3" stroke-width="1"/>
<line x1="22" y1="366.5" x2="1013.5" y2="366.5" stroke="#ebebeb" stroke-width="1"/>
<line x1="0" y1="366.5" x2="22" y2="366.5" stroke="#e3e3e3" stroke-width="1"/>
<line x1="22" y1="378.5" x2="1013.5" y2="378.5" stroke="#ebebeb" stroke-width="1"/>
<line x1="0" y1="378.5" x2="22" y2="378.5" stroke="#e3e3e3" stroke-width="1"/>
<line x1="22" y1="391.5" x2="1013.5" y2="391.5" stroke="#ebebeb" stroke-width="1"/>
<line x1="0" y1="391.5" x2="22" y2="391.5" stroke="#e3e3e3" stroke-width="1"/>
<line x1="22" y1="404.5" x2="1013.5" y2="404.5" stroke="#ebebeb" stroke-width="1"/>
<line x1="0" y1="404.5" x2="22" y2="404.5" stroke="#e3e3e3" stroke-width="1"/>
<line x1="22" y1="416.5" x2="1013.5" y2="416.5" stroke="#ebebeb" stroke-width="1"/>
<line x1="0" y1="416.5" x2="22" y2="416.5" stroke="#e3e3e3" stroke-width="1"/>
<line x1="22" y1="429.5" x2="1013.5" y2="429.5" stroke="#ebebeb" stroke-width="1"/>
<line x1="0" y1="429.5" x2="22" y2="429.5" stroke="#e3e3e3" stroke-width="1"/>
<line x1="22" y1="442.5" x2="1013.5" y2="442.5" stroke="#ebebeb" stroke-width="1"/>
<line x1="0" y1="442.5" x2="22" y2="442.5" stroke="#e3e3e3" stroke-width="1"/>
<line x1="63.5" y1="146" x2="63.5" y2="455" stroke="#ebebeb" stroke-width="1"/>
<line x1="63.5" y1="134.8" x2="63.5" y2="146" stroke="#e2e2e2" stroke-width="1"/>
<line x1="138.5" y1="146" x2="138.5" y2="455" stroke="#ebebeb" stroke-width="1"/>
<line x1="138.5" y1="134.8" x2="138.5" y2="146" stroke="#e2e2e2" stroke-width="1"/>
<line x1="179.5" y1="146" x2="179.5" y2="455" stroke="#ebebeb" stroke-width="1"/>
<line x1="179.5" y1="134.8" x2="179.5" y2="146" stroke="#e2e2e2" stroke-width="1"/>
<line x1="257.5" y1="146" x2="257.5" y2="455" stroke="#ebebeb" stroke-width="1"/>
<line x1="257.5" y1="134.8" x2="257.5" y2="146" stroke="#e2e2e2" stroke-width="1"/>
<line x1="298.5" y1="146" x2="298.5" y2="455" stroke="#ebebeb" stroke-width="1"/>
<line x1="298.5" y1="134.8" x2="298.5" y2="146" stroke="#e2e2e2" stroke-width="1"/>
<line x1="338.5" y1="146" x2="338.5" y2="455" stroke="#ebebeb" stroke-width="1"/>
<line x1="338.5" y1="134.8" x2="338.5" y2="146" stroke="#e2e2e2" stroke-width="1"/>
<line x1="391.5" y1="146" x2="391.5" y2="455" stroke="#ebebeb" stroke-width="1"/>
<line x1="391.5" y1="134.8" x2="391.5" y2="146" stroke="#e2e2e2" stroke-width="1"/>
<line x1="443.5" y1="146" x2="443.5" y2="455" stroke="#ebebeb" stroke-width="1"/>
<line x1="443.5" y1="134.8" x2="443.5" y2="146" stroke="#e2e2e2" stroke-width="1"/>
<line x1="484.5" y1="146" x2="484.5" y2="455" stroke="#ebebeb" stroke-width="1"/>
<line x1="484.5" y1="134.8" x2="484.5" y2="146" stroke="#e2e2e2" stroke-width="1"/>
<line x1="524.5" y1="146" x2="524.5" y2="455" stroke="#ebebeb" stroke-width="1"/>
<line x1="524.5" y1="134.8" x2="524.5" y2="146" stroke="#e2e2e2" stroke-width="1"/>
<line x1="565.5" y1="146" x2="565.5" y2="455" stroke="#ebebeb" stroke-width="1"/>
<line x1="565.5" y1="134.8" x2="565.5" y2="146" stroke="#e2e2e2" stroke-width="1"/>
<line x1="606.5" y1="146" x2="606.5" y2="455" stroke="#ebebeb" stroke-width="1"/>
<line x1="606.5" y1="134.8" x2="606.5" y2="146" stroke="#e2e2e2" stroke-width="1"/>
<line x1="646.5" y1="146" x2="646.5" y2="455" stroke="#ebebeb" stroke-width="1"/>
<line x1="646.5" y1="134.8" x2="646.5" y2="146" stroke="#e2e2e2" stroke-width="1"/>
<line x1="687.5" y1="146" x2="687.5" y2="455" stroke="#ebebeb" stroke-width="1"/>
<line x1="687.5" y1="134.8" x2="687.5" y2="146" stroke="#e2e2e2" stroke-width="1"/>
<line x1="728.5" y1="146" x2="728.5" y2="455" stroke="#ebebeb" stroke-width="1"/>
<line x1="728.5" y1="134.8" x2="728.5" y2="146" stroke="#e2e2e2" stroke-width="1"/>
<line x1="769.5" y1="146" x2="769.5" y2="455" stroke="#ebebeb" stroke-width="1"/>
<line x1="769.5" y1="134.8" x2="769.5" y2="146" stroke="#e2e2e2" stroke-width="1"/>
<line x1="809.5" y1="146" x2="809.5" y2="455" stroke="#ebebeb" stroke-width="1"/>
<line x1="809.5" y1="134.8" x2="809.5" y2="146" stroke="#e2e2e2" stroke-width="1"/>
<line x1="850.5" y1="146" x2="850.5" y2="455" stroke="#ebebeb" stroke-width="1"/>
<line x1="850.5" y1="134.8" x2="850.5" y2="146" stroke="#e2e2e2" stroke-width="1"/>
<line x1="890.5" y1="146" x2="890.5" y2="455" stroke="#ebebeb" stroke-width="1"/>
<line x1="890.5" y1="134.8" x2="890.5" y2="146" stroke="#e2e2e2" stroke-width="1"/>
<line x1="931.5" y1="146" x2="931.5" y2="455" stroke="#ebebeb" stroke-width="1"/>
<line x1="931.5" y1="134.8" x2="931.5" y2="146" stroke="#e2e2e2" stroke-width="1"/>
<line x1="972.5" y1="146" x2="972.5" y2="455" stroke="#ebebeb" stroke-width="1"/>
<line x1="972.5" y1="134.8" x2="972.5" y2="146" stroke="#e2e2e2" stroke-width="1"/>
<line x1="1013.5" y1="146" x2="1013.5" y2="455" stroke="#ebebeb" stroke-width="1"/>
<line x1="1013.5" y1="134.8" x2="1013.5" y2="146" stroke="#e2e2e2" stroke-width="1"/>
<line x1="21.5" y1="134.3" x2="21.5" y2="455" stroke="#dcdcdc" stroke-width="1"/>
<line x1="0" y1="145.5" x2="1013.5" y2="145.5" stroke="#dedede" stroke-width="1"/>
<text x="42.65" y="143.30" font-family="Liberation Sans" font-size="8.4" fill="#107c41" font-weight="normal" text-anchor="middle" stroke="#107c41" stroke-width="0.4">A</text>
<text x="100.90" y="143.30" font-family="Liberation Sans" font-size="8.4" fill="#747474" font-weight="normal" text-anchor="middle">B</text>
<text x="159.00" y="143.30" font-family="Liberation Sans" font-size="8.4" fill="#747474" font-weight="normal" text-anchor="middle">C</text>
<text x="218.50" y="143.30" font-family="Liberation Sans" font-size="8.4" fill="#747474" font-weight="normal" text-anchor="middle">D</text>
<text x="278.00" y="143.30" font-family="Liberation Sans" font-size="8.4" fill="#747474" font-weight="normal" text-anchor="middle">E</text>
<text x="318.55" y="143.30" font-family="Liberation Sans" font-size="8.4" fill="#747474" font-weight="normal" text-anchor="middle">F</text>
<text x="365.10" y="143.30" font-family="Liberation Sans" font-size="8.4" fill="#747474" font-weight="normal" text-anchor="middle">G</text>
<text x="417.60" y="143.30" font-family="Liberation Sans" font-size="8.4" fill="#747474" font-weight="normal" text-anchor="middle">H</text>
<text x="463.80" y="143.30" font-family="Liberation Sans" font-size="8.4" fill="#747474" font-weight="normal" text-anchor="middle">I</text>
<text x="504.25" y="143.30" font-family="Liberation Sans" font-size="8.4" fill="#747474" font-weight="normal" text-anchor="middle">J</text>
<text x="544.90" y="143.30" font-family="Liberation Sans" font-size="8.4" fill="#747474" font-weight="normal" text-anchor="middle">K</text>
<text x="585.65" y="143.30" font-family="Liberation Sans" font-size="8.4" fill="#747474" font-weight="normal" text-anchor="middle">L</text>
<text x="626.25" y="143.30" font-family="Liberation Sans" font-size="8.4" fill="#747474" font-weight="normal" text-anchor="middle">M</text>
<text x="666.95" y="143.30" font-family="Liberation Sans" font-size="8.4" fill="#747474" font-weight="normal" text-anchor="middle">N</text>
<text x="707.95" y="143.30" font-family="Liberation Sans" font-size="8.4" fill="#747474" font-weight="normal" text-anchor="middle">O</text>
<text x="748.80" y="143.30" font-family="Liberation Sans" font-size="8.4" fill="#747474" font-weight="normal" text-anchor="middle">P</text>
<text x="789.20" y="143.30" font-family="Liberation Sans" font-size="8.4" fill="#747474" font-weight="normal" text-anchor="middle">Q</text>
<text x="829.80" y="143.30" font-family="Liberation Sans" font-size="8.4" fill="#747474" font-weight="normal" text-anchor="middle">R</text>
<text x="870.55" y="143.30" font-family="Liberation Sans" font-size="8.4" fill="#747474" font-weight="normal" text-anchor="middle">S</text>
<text x="911.05" y="143.30" font-family="Liberation Sans" font-size="8.4" fill="#747474" font-weight="normal" text-anchor="middle">T</text>
<text x="951.85" y="143.30" font-family="Liberation Sans" font-size="8.4" fill="#747474" font-weight="normal" text-anchor="middle">U</text>
<text x="992.85" y="143.30" font-family="Liberation Sans" font-size="8.4" fill="#747474" font-weight="normal" text-anchor="middle">V</text>
<text x="10.50" y="156.20" font-family="Liberation Sans" font-size="8.4" fill="#107c41" font-weight="normal" text-anchor="middle" stroke="#107c41" stroke-width="0.4">1</text>
<text x="10.50" y="170.40" font-family="Liberation Sans" font-size="8.4" fill="#747474" font-weight="normal" text-anchor="middle">2</text>
<text x="10.50" y="185.30" font-family="Liberation Sans" font-size="8.4" fill="#747474" font-weight="normal" text-anchor="middle">3</text>
<text x="10.50" y="197.80" font-family="Liberation Sans" font-size="8.4" fill="#747474" font-weight="normal" text-anchor="middle">4</text>
<text x="10.50" y="210.50" font-family="Liberation Sans" font-size="8.4" fill="#747474" font-weight="normal" text-anchor="middle">5</text>
<text x="10.50" y="223.30" font-family="Liberation Sans" font-size="8.4" fill="#747474" font-weight="normal" text-anchor="middle">6</text>
<text x="10.50" y="235.80" font-family="Liberation Sans" font-size="8.4" fill="#747474" font-weight="normal" text-anchor="middle">7</text>
<text x="10.50" y="248.50" font-family="Liberation Sans" font-size="8.4" fill="#747474" font-weight="normal" text-anchor="middle">8</text>
<text x="10.50" y="261.20" font-family="Liberation Sans" font-size="8.4" fill="#747474" font-weight="normal" text-anchor="middle">9</text>
<text x="10.50" y="286.40" font-family="Liberation Sans" font-size="8.4" fill="#747474" font-weight="normal" text-anchor="middle">10</text>
<text x="10.50" y="299.30" font-family="Liberation Sans" font-size="8.4" fill="#747474" font-weight="normal" text-anchor="middle">11</text>
<text x="10.50" y="324.80" font-family="Liberation Sans" font-size="8.4" fill="#747474" font-weight="normal" text-anchor="middle">12</text>
<text x="10.50" y="337.40" font-family="Liberation Sans" font-size="8.4" fill="#747474" font-weight="normal" text-anchor="middle">13</text>
<text x="10.50" y="350.10" font-family="Liberation Sans" font-size="8.4" fill="#747474" font-weight="normal" text-anchor="middle">14</text>
<text x="10.50" y="362.80" font-family="Liberation Sans" font-size="8.4" fill="#747474" font-weight="normal" text-anchor="middle">15</text>
<text x="10.50" y="375.60" font-family="Liberation Sans" font-size="8.4" fill="#747474" font-weight="normal" text-anchor="middle">16</text>
<text x="10.50" y="388.30" font-family="Liberation Sans" font-size="8.4" fill="#747474" font-weight="normal" text-anchor="middle">17</text>
<text x="10.50" y="401.00" font-family="Liberation Sans" font-size="8.4" fill="#747474" font-weight="normal" text-anchor="middle">18</text>
<text x="10.50" y="413.70" font-family="Liberation Sans" font-size="8.4" fill="#747474" font-weight="normal" text-anchor="middle">19</text>
<text x="10.50" y="426.40" font-family="Liberation Sans" font-size="8.4" fill="#747474" font-weight="normal" text-anchor="middle">20</text>
<text x="10.50" y="439.10" font-family="Liberation Sans" font-size="8.4" fill="#747474" font-weight="normal" text-anchor="middle">21</text>
<text x="10.50" y="451.80" font-family="Liberation Sans" font-size="8.4" fill="#747474" font-weight="normal" text-anchor="middle">22</text>
<rect x="62.8" y="173.6" width="380.8" height="14.900000000000006" fill="#9999ff"/>
<text x="64.60" y="185.90" font-family="Liberation Serif" font-size="10.5" fill="#333333" font-weight="bold" text-anchor="start">OrderDate</text>
<text x="139.80" y="185.90" font-family="Liberation Serif" font-size="10.5" fill="#333333" font-weight="bold" text-anchor="start">Region</text>
<text x="180.80" y="185.90" font-family="Liberation Serif" font-size="10.5" fill="#333333" font-weight="bold" text-anchor="start">Rep</text>
<text x="258.80" y="185.90" font-family="Liberation Serif" font-size="10.5" fill="#333333" font-weight="bold" text-anchor="start">Item</text>
<text x="299.80" y="185.90" font-family="Liberation Serif" font-size="10.5" fill="#333333" font-weight="bold" text-anchor="start">Units</text>
<text x="339.90" y="185.90" font-family="Liberation Serif" font-size="10.5" fill="#333333" font-weight="bold" text-anchor="start">UnitCost</text>
<text x="392.90" y="185.90" font-family="Liberation Serif" font-size="10.5" fill="#333333" font-weight="bold" text-anchor="start">Total</text>
<text x="139.80" y="199.00" font-family="Liberation Serif" font-size="11.4" fill="#474747" font-weight="normal" text-anchor="start" textLength="18.94" lengthAdjust="spacingAndGlyphs" stroke="#474747" stroke-width="0.22">East</text>
<text x="180.80" y="199.00" font-family="Liberation Serif" font-size="11.4" fill="#474747" font-weight="normal" text-anchor="start" textLength="24.45" lengthAdjust="spacingAndGlyphs" stroke="#474747" stroke-width="0.22">Jones</text>
<text x="258.80" y="199.00" font-family="Liberation Serif" font-size="11.4" fill="#474747" font-weight="normal" text-anchor="start" textLength="27.50" lengthAdjust="spacingAndGlyphs" stroke="#474747" stroke-width="0.22">Pencil</text>
<text x="139.80" y="211.70" font-family="Liberation Serif" font-size="11.4" fill="#474747" font-weight="normal" text-anchor="start" textLength="32.38" lengthAdjust="spacingAndGlyphs" stroke="#474747" stroke-width="0.22">Central</text>
<text x="180.80" y="211.70" font-family="Liberation Serif" font-size="11.4" fill="#474747" font-weight="normal" text-anchor="start" textLength="27.50" lengthAdjust="spacingAndGlyphs" stroke="#474747" stroke-width="0.22">Kivell</text>
<text x="258.80" y="211.70" font-family="Liberation Serif" font-size="11.4" fill="#474747" font-weight="normal" text-anchor="start" textLength="29.94" lengthAdjust="spacingAndGlyphs" stroke="#474747" stroke-width="0.22">Binder</text>
<text x="139.80" y="224.50" font-family="Liberation Serif" font-size="11.4" fill="#474747" font-weight="normal" text-anchor="start" textLength="32.38" lengthAdjust="spacingAndGlyphs" stroke="#474747" stroke-width="0.22">Central</text>
<text x="180.80" y="224.50" font-family="Liberation Serif" font-size="11.4" fill="#474747" font-weight="normal" text-anchor="start" textLength="31.77" lengthAdjust="spacingAndGlyphs" stroke="#474747" stroke-width="0.22">Jardine</text>
<text x="258.80" y="224.50" font-family="Liberation Serif" font-size="11.4" fill="#474747" font-weight="normal" text-anchor="start" textLength="27.50" lengthAdjust="spacingAndGlyphs" stroke="#474747" stroke-width="0.22">Pencil</text>
<text x="139.80" y="237.00" font-family="Liberation Serif" font-size="11.4" fill="#474747" font-weight="normal" text-anchor="start" textLength="32.38" lengthAdjust="spacingAndGlyphs" stroke="#474747" stroke-width="0.22">Central</text>
<text x="180.80" y="237.00" font-family="Liberation Serif" font-size="11.4" fill="#474747" font-weight="normal" text-anchor="start" textLength="17.11" lengthAdjust="spacingAndGlyphs" stroke="#474747" stroke-width="0.22">Gill</text>
<text x="258.80" y="237.00" font-family="Liberation Serif" font-size="11.4" fill="#474747" font-weight="normal" text-anchor="start" textLength="16.50" lengthAdjust="spacingAndGlyphs" stroke="#474747" stroke-width="0.22">Pen</text>
<text x="139.80" y="249.70" font-family="Liberation Serif" font-size="11.4" fill="#474747" font-weight="normal" text-anchor="start" textLength="21.72" lengthAdjust="spacingAndGlyphs" stroke="#474747" stroke-width="0.22">West</text>
<text x="180.80" y="249.70" font-family="Liberation Serif" font-size="11.4" fill="#474747" font-weight="normal" text-anchor="start" textLength="34.84" lengthAdjust="spacingAndGlyphs" stroke="#474747" stroke-width="0.22">Sorvino</text>
<text x="258.80" y="249.70" font-family="Liberation Serif" font-size="11.4" fill="#474747" font-weight="normal" text-anchor="start" textLength="27.50" lengthAdjust="spacingAndGlyphs" stroke="#474747" stroke-width="0.22">Pencil</text>
<text x="139.80" y="262.40" font-family="Liberation Serif" font-size="11.4" fill="#474747" font-weight="normal" text-anchor="start" textLength="18.94" lengthAdjust="spacingAndGlyphs" stroke="#474747" stroke-width="0.22">East</text>
<text x="180.80" y="262.40" font-family="Liberation Serif" font-size="11.4" fill="#474747" font-weight="normal" text-anchor="start" textLength="24.45" lengthAdjust="spacingAndGlyphs" stroke="#474747" stroke-width="0.22">Jones</text>
<text x="258.80" y="262.40" font-family="Liberation Serif" font-size="11.4" fill="#474747" font-weight="normal" text-anchor="start" textLength="29.94" lengthAdjust="spacingAndGlyphs" stroke="#474747" stroke-width="0.22">Binder</text>
<text x="139.80" y="287.60" font-family="Liberation Serif" font-size="11.4" fill="#474747" font-weight="normal" text-anchor="start" textLength="32.38" lengthAdjust="spacingAndGlyphs" stroke="#474747" stroke-width="0.22">Central</text>
<text x="180.80" y="287.60" font-family="Liberation Serif" font-size="11.4" fill="#474747" font-weight="normal" text-anchor="start" textLength="39.71" lengthAdjust="spacingAndGlyphs" stroke="#474747" stroke-width="0.22">Andrews</text>
<text x="258.80" y="287.60" font-family="Liberation Serif" font-size="11.4" fill="#474747" font-weight="normal" text-anchor="start" textLength="27.50" lengthAdjust="spacingAndGlyphs" stroke="#474747" stroke-width="0.22">Pencil</text>
<text x="139.80" y="300.50" font-family="Liberation Serif" font-size="11.4" fill="#474747" font-weight="normal" text-anchor="start" textLength="32.38" lengthAdjust="spacingAndGlyphs" stroke="#474747" stroke-width="0.22">Central</text>
<text x="180.80" y="300.50" font-family="Liberation Serif" font-size="11.4" fill="#474747" font-weight="normal" text-anchor="start" textLength="31.77" lengthAdjust="spacingAndGlyphs" stroke="#474747" stroke-width="0.22">Jardine</text>
<text x="258.80" y="300.50" font-family="Liberation Serif" font-size="11.4" fill="#474747" font-weight="normal" text-anchor="start" textLength="27.50" lengthAdjust="spacingAndGlyphs" stroke="#474747" stroke-width="0.22">Pencil</text>
<text x="139.80" y="326.00" font-family="Liberation Serif" font-size="11.4" fill="#474747" font-weight="normal" text-anchor="start" textLength="21.72" lengthAdjust="spacingAndGlyphs" stroke="#474747" stroke-width="0.22">West</text>
<text x="180.80" y="326.00" font-family="Liberation Serif" font-size="11.4" fill="#474747" font-weight="normal" text-anchor="start" textLength="47.06" lengthAdjust="spacingAndGlyphs" stroke="#474747" stroke-width="0.22">Thompson</text>
<text x="258.80" y="326.00" font-family="Liberation Serif" font-size="11.4" fill="#474747" font-weight="normal" text-anchor="start" textLength="27.50" lengthAdjust="spacingAndGlyphs" stroke="#474747" stroke-width="0.22">Pencil</text>
<text x="139.80" y="338.60" font-family="Liberation Serif" font-size="11.4" fill="#474747" font-weight="normal" text-anchor="start" textLength="18.94" lengthAdjust="spacingAndGlyphs" stroke="#474747" stroke-width="0.22">East</text>
<text x="180.80" y="338.60" font-family="Liberation Serif" font-size="11.4" fill="#474747" font-weight="normal" text-anchor="start" textLength="24.45" lengthAdjust="spacingAndGlyphs" stroke="#474747" stroke-width="0.22">Jones</text>
<text x="258.80" y="338.60" font-family="Liberation Serif" font-size="11.4" fill="#474747" font-weight="normal" text-anchor="start" textLength="29.94" lengthAdjust="spacingAndGlyphs" stroke="#474747" stroke-width="0.22">Binder</text>
<text x="139.80" y="351.30" font-family="Liberation Serif" font-size="11.4" fill="#474747" font-weight="normal" text-anchor="start" textLength="32.38" lengthAdjust="spacingAndGlyphs" stroke="#474747" stroke-width="0.22">Central</text>
<text x="180.80" y="351.30" font-family="Liberation Serif" font-size="11.4" fill="#474747" font-weight="normal" text-anchor="start" textLength="34.63" lengthAdjust="spacingAndGlyphs" stroke="#474747" stroke-width="0.22">Morgan</text>
<text x="258.80" y="351.30" font-family="Liberation Serif" font-size="11.4" fill="#474747" font-weight="normal" text-anchor="start" textLength="27.50" lengthAdjust="spacingAndGlyphs" stroke="#474747" stroke-width="0.22">Pencil</text>
<text x="139.80" y="364.00" font-family="Liberation Serif" font-size="11.4" fill="#474747" font-weight="normal" text-anchor="start" textLength="18.94" lengthAdjust="spacingAndGlyphs" stroke="#474747" stroke-width="0.22">East</text>
<text x="180.80" y="364.00" font-family="Liberation Serif" font-size="11.4" fill="#474747" font-weight="normal" text-anchor="start" textLength="35.43" lengthAdjust="spacingAndGlyphs" stroke="#474747" stroke-width="0.22">Howard</text>
<text x="258.80" y="364.00" font-family="Liberation Serif" font-size="11.4" fill="#474747" font-weight="normal" text-anchor="start" textLength="29.94" lengthAdjust="spacingAndGlyphs" stroke="#474747" stroke-width="0.22">Binder</text>
<text x="139.80" y="376.80" font-family="Liberation Serif" font-size="11.4" fill="#474747" font-weight="normal" text-anchor="start" textLength="18.94" lengthAdjust="spacingAndGlyphs" stroke="#474747" stroke-width="0.22">East</text>
<text x="180.80" y="376.80" font-family="Liberation Serif" font-size="11.4" fill="#474747" font-weight="normal" text-anchor="start" textLength="28.10" lengthAdjust="spacingAndGlyphs" stroke="#474747" stroke-width="0.22">Parent</text>
<text x="258.80" y="376.80" font-family="Liberation Serif" font-size="11.4" fill="#474747" font-weight="normal" text-anchor="start" textLength="29.94" lengthAdjust="spacingAndGlyphs" stroke="#474747" stroke-width="0.22">Binder</text>
<text x="139.80" y="389.50" font-family="Liberation Serif" font-size="11.4" fill="#474747" font-weight="normal" text-anchor="start" textLength="18.94" lengthAdjust="spacingAndGlyphs" stroke="#474747" stroke-width="0.22">East</text>
<text x="180.80" y="389.50" font-family="Liberation Serif" font-size="11.4" fill="#474747" font-weight="normal" text-anchor="start" textLength="24.45" lengthAdjust="spacingAndGlyphs" stroke="#474747" stroke-width="0.22">Jones</text>
<text x="258.80" y="389.50" font-family="Liberation Serif" font-size="11.4" fill="#474747" font-weight="normal" text-anchor="start" textLength="27.50" lengthAdjust="spacingAndGlyphs" stroke="#474747" stroke-width="0.22">Pencil</text>
<text x="139.80" y="402.20" font-family="Liberation Serif" font-size="11.4" fill="#474747" font-weight="normal" text-anchor="start" textLength="32.38" lengthAdjust="spacingAndGlyphs" stroke="#474747" stroke-width="0.22">Central</text>
<text x="180.80" y="402.20" font-family="Liberation Serif" font-size="11.4" fill="#474747" font-weight="normal" text-anchor="start" textLength="26.29" lengthAdjust="spacingAndGlyphs" stroke="#474747" stroke-width="0.22">Smith</text>
<text x="258.80" y="402.20" font-family="Liberation Serif" font-size="11.4" fill="#474747" font-weight="normal" text-anchor="start" textLength="22.61" lengthAdjust="spacingAndGlyphs" stroke="#474747" stroke-width="0.22">Desk</text>
<text x="139.80" y="414.90" font-family="Liberation Serif" font-size="11.4" fill="#474747" font-weight="normal" text-anchor="start" textLength="18.94" lengthAdjust="spacingAndGlyphs" stroke="#474747" stroke-width="0.22">East</text>
<text x="180.80" y="414.90" font-family="Liberation Serif" font-size="11.4" fill="#474747" font-weight="normal" text-anchor="start" textLength="24.45" lengthAdjust="spacingAndGlyphs" stroke="#474747" stroke-width="0.22">Jones</text>
<text x="258.80" y="414.90" font-family="Liberation Serif" font-size="11.4" fill="#474747" font-weight="normal" text-anchor="start" textLength="33.31" lengthAdjust="spacingAndGlyphs" stroke="#474747" stroke-width="0.22">Pen Set</text>
<text x="139.80" y="427.60" font-family="Liberation Serif" font-size="11.4" fill="#474747" font-weight="normal" text-anchor="start" textLength="32.38" lengthAdjust="spacingAndGlyphs" stroke="#474747" stroke-width="0.22">Central</text>
<text x="180.80" y="427.60" font-family="Liberation Serif" font-size="11.4" fill="#474747" font-weight="normal" text-anchor="start" textLength="34.63" lengthAdjust="spacingAndGlyphs" stroke="#474747" stroke-width="0.22">Morgan</text>
<text x="258.80" y="427.60" font-family="Liberation Serif" font-size="11.4" fill="#474747" font-weight="normal" text-anchor="start" textLength="29.94" lengthAdjust="spacingAndGlyphs" stroke="#474747" stroke-width="0.22">Binder</text>
<text x="139.80" y="440.30" font-family="Liberation Serif" font-size="11.4" fill="#474747" font-weight="normal" text-anchor="start" textLength="18.94" lengthAdjust="spacingAndGlyphs" stroke="#474747" stroke-width="0.22">East</text>
<text x="180.80" y="440.30" font-family="Liberation Serif" font-size="11.4" fill="#474747" font-weight="normal" text-anchor="start" textLength="24.45" lengthAdjust="spacingAndGlyphs" stroke="#474747" stroke-width="0.22">Jones</text>
<text x="258.80" y="440.30" font-family="Liberation Serif" font-size="11.4" fill="#474747" font-weight="normal" text-anchor="start" textLength="16.50" lengthAdjust="spacingAndGlyphs" stroke="#474747" stroke-width="0.22">Pen</text>
<text x="139.80" y="453.00" font-family="Liberation Serif" font-size="11.4" fill="#474747" font-weight="normal" text-anchor="start" textLength="18.94" lengthAdjust="spacingAndGlyphs" stroke="#474747" stroke-width="0.22">East</text>
<text x="180.80" y="453.00" font-family="Liberation Serif" font-size="11.4" fill="#474747" font-weight="normal" text-anchor="start" textLength="28.10" lengthAdjust="spacingAndGlyphs" stroke="#474747" stroke-width="0.22">Parent</text>
<text x="258.80" y="453.00" font-family="Liberation Serif" font-size="11.4" fill="#474747" font-weight="normal" text-anchor="start" textLength="16.50" lengthAdjust="spacingAndGlyphs" stroke="#474747" stroke-width="0.22">Pen</text>
<g font-family="Liberation Serif" font-size="11.3" fill="#474747" stroke="#474747" stroke-width="0.25" text-anchor="middle"><text transform="translate(96.20,199.00) scale(0.9,0.76)">1</text><text transform="translate(101.25,200.20) scale(1.25,1.12)">/</text><text transform="translate(106.90,199.00) scale(0.92,0.95)">6</text><text transform="translate(112.55,200.20) scale(1.25,1.12)">/</text><text transform="translate(118.20,199.00) scale(0.95,0.76)">2</text><text transform="translate(123.60,199.00) scale(0.95,0.76)">0</text><text transform="translate(129.00,199.00) scale(0.95,0.76)">2</text><text transform="translate(134.40,199.00) scale(0.95,0.76)">0</text><text transform="translate(329.10,200.75) scale(1.0,0.98)">9</text><text transform="translate(334.50,200.75) scale(1.0,0.98)">5</text><text transform="translate(373.90,199.00) scale(0.9,0.76)">1</text><text transform="translate(377.70,199.00) scale(1.0,1.0)">.</text><text transform="translate(382.10,200.75) scale(1.0,0.98)">9</text><text transform="translate(387.50,200.75) scale(1.0,0.98)">9</text><text transform="translate(415.10,199.00) scale(0.9,0.76)">1</text><text transform="translate(419.90,199.00) scale(0.92,0.95)">8</text><text transform="translate(425.30,200.75) scale(1.0,0.98)">9</text><text transform="translate(429.70,199.00) scale(1.0,1.0)">.</text><text transform="translate(434.10,199.00) scale(0.95,0.76)">0</text><text transform="translate(439.50,200.75) scale(1.0,0.98)">5</text><text transform="translate(90.80,211.70) scale(0.9,0.76)">1</text><text transform="translate(95.85,212.90) scale(1.25,1.12)">/</text><text transform="translate(101.50,211.70) scale(0.95,0.76)">2</text><text transform="translate(106.90,213.45) scale(1.0,0.98)">3</text><text transform="translate(112.55,212.90) scale(1.25,1.12)">/</text><text transform="translate(118.20,211.70) scale(0.95,0.76)">2</text><text transform="translate(123.60,211.70) scale(0.95,0.76)">0</text><text transform="translate(129.00,211.70) scale(0.95,0.76)">2</text><text transform="translate(134.40,211.70) scale(0.95,0.76)">0</text><text transform="translate(329.10,213.45) scale(1.0,0.98)">5</text><text transform="translate(334.50,211.70) scale(0.95,0.76)">0</text><text transform="translate(368.50,211.70) scale(0.9,0.76)">1</text><text transform="translate(373.30,213.45) scale(1.0,0.98)">9</text><text transform="translate(377.70,211.70) scale(1.0,1.0)">.</text><text transform="translate(382.10,213.45) scale(1.0,0.98)">9</text><text transform="translate(387.50,213.45) scale(1.0,0.98)">9</text><text transform="translate(419.90,213.45) scale(1.0,0.98)">9</text><text transform="translate(425.30,213.45) scale(1.0,0.98)">9</text><text transform="translate(430.70,213.45) scale(1.0,0.98)">9</text><text transform="translate(435.10,211.70) scale(1.0,1.0)">.</text><text transform="translate(439.50,213.45) scale(1.0,0.98)">5</text><text transform="translate(95.60,224.50) scale(0.95,0.76)">2</text><text transform="translate(101.25,225.70) scale(1.25,1.12)">/</text><text transform="translate(106.90,226.25) scale(1.0,0.98)">9</text><text transform="translate(112.55,225.70) scale(1.25,1.12)">/</text><text transform="translate(118.20,224.50) scale(0.95,0.76)">2</text><text transform="translate(123.60,224.50) scale(0.95,0.76)">0</text><text transform="translate(129.00,224.50) scale(0.95,0.76)">2</text><text transform="translate(134.40,224.50) scale(0.95,0.76)">0</text><text transform="translate(329.10,226.25) scale(1.0,0.98)">3</text><text transform="translate(334.50,224.50) scale(0.92,0.95)">6</text><text transform="translate(373.30,226.25) scale(1.0,0.98)">4</text><text transform="translate(377.70,224.50) scale(1.0,1.0)">.</text><text transform="translate(382.10,226.25) scale(1.0,0.98)">9</text><text transform="translate(387.50,226.25) scale(1.0,0.98)">9</text><text transform="translate(415.10,224.50) scale(0.9,0.76)">1</text><text transform="translate(419.90,226.25) scale(1.0,0.98)">7</text><text transform="translate(425.30,226.25) scale(1.0,0.98)">9</text><text transform="translate(429.70,224.50) scale(1.0,1.0)">.</text><text transform="translate(434.10,224.50) scale(0.92,0.95)">6</text><text transform="translate(439.50,226.25) scale(1.0,0.98)">4</text><text transform="translate(90.20,237.00) scale(0.95,0.76)">2</text><text transform="translate(95.85,238.20) scale(1.25,1.12)">/</text><text transform="translate(101.50,237.00) scale(0.95,0.76)">2</text><text transform="translate(106.90,237.00) scale(0.92,0.95)">6</text><text transform="translate(112.55,238.20) scale(1.25,1.12)">/</text><text transform="translate(118.20,237.00) scale(0.95,0.76)">2</text><text transform="translate(123.60,237.00) scale(0.95,0.76)">0</text><text transform="translate(129.00,237.00) scale(0.95,0.76)">2</text><text transform="translate(134.40,237.00) scale(0.95,0.76)">0</text><text transform="translate(329.10,237.00) scale(0.95,0.76)">2</text><text transform="translate(334.50,238.75) scale(1.0,0.98)">7</text><text transform="translate(368.50,237.00) scale(0.9,0.76)">1</text><text transform="translate(373.30,238.75) scale(1.0,0.98)">9</text><text transform="translate(377.70,237.00) scale(1.0,1.0)">.</text><text transform="translate(382.10,238.75) scale(1.0,0.98)">9</text><text transform="translate(387.50,238.75) scale(1.0,0.98)">9</text><text transform="translate(414.50,238.75) scale(1.0,0.98)">5</text><text transform="translate(419.90,238.75) scale(1.0,0.98)">3</text><text transform="translate(425.30,238.75) scale(1.0,0.98)">9</text><text transform="translate(429.70,237.00) scale(1.0,1.0)">.</text><text transform="translate(434.10,238.75) scale(1.0,0.98)">7</text><text transform="translate(439.50,238.75) scale(1.0,0.98)">3</text><text transform="translate(91.40,251.45) scale(1.0,0.98)">3</text><text transform="translate(97.05,250.90) scale(1.25,1.12)">/</text><text transform="translate(102.10,249.70) scale(0.9,0.76)">1</text><text transform="translate(106.90,251.45) scale(1.0,0.98)">5</text><text transform="translate(112.55,250.90) scale(1.25,1.12)">/</text><text transform="translate(118.20,249.70) scale(0.95,0.76)">2</text><text transform="translate(123.60,249.70) scale(0.95,0.76)">0</text><text transform="translate(129.00,249.70) scale(0.95,0.76)">2</text><text transform="translate(134.40,249.70) scale(0.95,0.76)">0</text><text transform="translate(329.10,251.45) scale(1.0,0.98)">5</text><text transform="translate(334.50,249.70) scale(0.92,0.95)">6</text><text transform="translate(373.30,249.70) scale(0.95,0.76)">2</text><text transform="translate(377.70,249.70) scale(1.0,1.0)">.</text><text transform="translate(382.10,251.45) scale(1.0,0.98)">9</text><text transform="translate(387.50,251.45) scale(1.0,0.98)">9</text><text transform="translate(415.10,249.70) scale(0.9,0.76)">1</text><text transform="translate(419.90,249.70) scale(0.92,0.95)">6</text><text transform="translate(425.30,251.45) scale(1.0,0.98)">7</text><text transform="translate(429.70,249.70) scale(1.0,1.0)">.</text><text transform="translate(434.10,251.45) scale(1.0,0.98)">4</text><text transform="translate(439.50,251.45) scale(1.0,0.98)">4</text><text transform="translate(96.80,264.15) scale(1.0,0.98)">4</text><text transform="translate(102.45,263.60) scale(1.25,1.12)">/</text><text transform="translate(107.50,262.40) scale(0.9,0.76)">1</text><text transform="translate(112.55,263.60) scale(1.25,1.12)">/</text><text transform="translate(118.20,262.40) scale(0.95,0.76)">2</text><text transform="translate(123.60,262.40) scale(0.95,0.76)">0</text><text transform="translate(129.00,262.40) scale(0.95,0.76)">2</text><text transform="translate(134.40,262.40) scale(0.95,0.76)">0</text><text transform="translate(329.10,262.40) scale(0.92,0.95)">6</text><text transform="translate(334.50,262.40) scale(0.95,0.76)">0</text><text transform="translate(373.30,264.15) scale(1.0,0.98)">4</text><text transform="translate(377.70,262.40) scale(1.0,1.0)">.</text><text transform="translate(382.10,264.15) scale(1.0,0.98)">9</text><text transform="translate(387.50,264.15) scale(1.0,0.98)">9</text><text transform="translate(419.90,262.40) scale(0.95,0.76)">2</text><text transform="translate(425.30,264.15) scale(1.0,0.98)">9</text><text transform="translate(430.70,264.15) scale(1.0,0.98)">9</text><text transform="translate(435.10,262.40) scale(1.0,1.0)">.</text><text transform="translate(439.50,264.15) scale(1.0,0.98)">4</text><text transform="translate(91.40,289.35) scale(1.0,0.98)">4</text><text transform="translate(97.05,288.80) scale(1.25,1.12)">/</text><text transform="translate(102.10,287.60) scale(0.9,0.76)">1</text><text transform="translate(106.90,287.60) scale(0.92,0.95)">8</text><text transform="translate(112.55,288.80) scale(1.25,1.12)">/</text><text transform="translate(118.20,287.60) scale(0.95,0.76)">2</text><text transform="translate(123.60,287.60) scale(0.95,0.76)">0</text><text transform="translate(129.00,287.60) scale(0.95,0.76)">2</text><text transform="translate(134.40,287.60) scale(0.95,0.76)">0</text><text transform="translate(329.10,289.35) scale(1.0,0.98)">7</text><text transform="translate(334.50,289.35) scale(1.0,0.98)">5</text><text transform="translate(373.90,287.60) scale(0.9,0.76)">1</text><text transform="translate(377.70,287.60) scale(1.0,1.0)">.</text><text transform="translate(382.10,289.35) scale(1.0,0.98)">9</text><text transform="translate(387.50,289.35) scale(1.0,0.98)">9</text><text transform="translate(415.10,287.60) scale(0.9,0.76)">1</text><text transform="translate(419.90,289.35) scale(1.0,0.98)">4</text><text transform="translate(425.30,289.35) scale(1.0,0.98)">9</text><text transform="translate(429.70,287.60) scale(1.0,1.0)">.</text><text transform="translate(434.10,287.60) scale(0.95,0.76)">2</text><text transform="translate(439.50,289.35) scale(1.0,0.98)">5</text><text transform="translate(95.60,302.25) scale(1.0,0.98)">5</text><text transform="translate(101.25,301.70) scale(1.25,1.12)">/</text><text transform="translate(106.90,302.25) scale(1.0,0.98)">5</text><text transform="translate(112.55,301.70) scale(1.25,1.12)">/</text><text transform="translate(118.20,300.50) scale(0.95,0.76)">2</text><text transform="translate(123.60,300.50) scale(0.95,0.76)">0</text><text transform="translate(129.00,300.50) scale(0.95,0.76)">2</text><text transform="translate(134.40,300.50) scale(0.95,0.76)">0</text><text transform="translate(329.10,302.25) scale(1.0,0.98)">9</text><text transform="translate(334.50,300.50) scale(0.95,0.76)">0</text><text transform="translate(373.30,302.25) scale(1.0,0.98)">4</text><text transform="translate(377.70,300.50) scale(1.0,1.0)">.</text><text transform="translate(382.10,302.25) scale(1.0,0.98)">9</text><text transform="translate(387.50,302.25) scale(1.0,0.98)">9</text><text transform="translate(421.10,302.25) scale(1.0,0.98)">4</text><text transform="translate(426.50,302.25) scale(1.0,0.98)">4</text><text transform="translate(431.90,302.25) scale(1.0,0.98)">9</text><text transform="translate(436.30,300.50) scale(1.0,1.0)">.</text><text transform="translate(440.10,300.50) scale(0.9,0.76)">1</text><text transform="translate(90.20,327.75) scale(1.0,0.98)">5</text><text transform="translate(95.85,327.20) scale(1.25,1.12)">/</text><text transform="translate(101.50,326.00) scale(0.95,0.76)">2</text><text transform="translate(106.90,326.00) scale(0.95,0.76)">2</text><text transform="translate(112.55,327.20) scale(1.25,1.12)">/</text><text transform="translate(118.20,326.00) scale(0.95,0.76)">2</text><text transform="translate(123.60,326.00) scale(0.95,0.76)">0</text><text transform="translate(129.00,326.00) scale(0.95,0.76)">2</text><text transform="translate(134.40,326.00) scale(0.95,0.76)">0</text><text transform="translate(329.10,327.75) scale(1.0,0.98)">3</text><text transform="translate(334.50,326.00) scale(0.95,0.76)">2</text><text transform="translate(373.90,326.00) scale(0.9,0.76)">1</text><text transform="translate(377.70,326.00) scale(1.0,1.0)">.</text><text transform="translate(382.10,327.75) scale(1.0,0.98)">9</text><text transform="translate(387.50,327.75) scale(1.0,0.98)">9</text><text transform="translate(419.90,326.00) scale(0.92,0.95)">6</text><text transform="translate(425.30,327.75) scale(1.0,0.98)">3</text><text transform="translate(429.70,326.00) scale(1.0,1.0)">.</text><text transform="translate(434.10,326.00) scale(0.92,0.95)">6</text><text transform="translate(439.50,326.00) scale(0.92,0.95)">8</text><text transform="translate(95.60,338.60) scale(0.92,0.95)">6</text><text transform="translate(101.25,339.80) scale(1.25,1.12)">/</text><text transform="translate(106.90,338.60) scale(0.92,0.95)">8</text><text transform="translate(112.55,339.80) scale(1.25,1.12)">/</text><text transform="translate(118.20,338.60) scale(0.95,0.76)">2</text><text transform="translate(123.60,338.60) scale(0.95,0.76)">0</text><text transform="translate(129.00,338.60) scale(0.95,0.76)">2</text><text transform="translate(134.40,338.60) scale(0.95,0.76)">0</text><text transform="translate(329.10,338.60) scale(0.92,0.95)">6</text><text transform="translate(334.50,338.60) scale(0.95,0.76)">0</text><text transform="translate(373.30,338.60) scale(0.92,0.95)">8</text><text transform="translate(377.70,338.60) scale(1.0,1.0)">.</text><text transform="translate(382.10,340.35) scale(1.0,0.98)">9</text><text transform="translate(387.50,340.35) scale(1.0,0.98)">9</text><text transform="translate(419.90,340.35) scale(1.0,0.98)">5</text><text transform="translate(425.30,340.35) scale(1.0,0.98)">3</text><text transform="translate(430.70,340.35) scale(1.0,0.98)">9</text><text transform="translate(435.10,338.60) scale(1.0,1.0)">.</text><text transform="translate(439.50,340.35) scale(1.0,0.98)">4</text><text transform="translate(90.20,351.30) scale(0.92,0.95)">6</text><text transform="translate(95.85,352.50) scale(1.25,1.12)">/</text><text transform="translate(101.50,351.30) scale(0.95,0.76)">2</text><text transform="translate(106.90,353.05) scale(1.0,0.98)">5</text><text transform="translate(112.55,352.50) scale(1.25,1.12)">/</text><text transform="translate(118.20,351.30) scale(0.95,0.76)">2</text><text transform="translate(123.60,351.30) scale(0.95,0.76)">0</text><text transform="translate(129.00,351.30) scale(0.95,0.76)">2</text><text transform="translate(134.40,351.30) scale(0.95,0.76)">0</text><text transform="translate(329.10,353.05) scale(1.0,0.98)">9</text><text transform="translate(334.50,351.30) scale(0.95,0.76)">0</text><text transform="translate(373.30,353.05) scale(1.0,0.98)">4</text><text transform="translate(377.70,351.30) scale(1.0,1.0)">.</text><text transform="translate(382.10,353.05) scale(1.0,0.98)">9</text><text transform="translate(387.50,353.05) scale(1.0,0.98)">9</text><text transform="translate(421.10,353.05) scale(1.0,0.98)">4</text><text transform="translate(426.50,353.05) scale(1.0,0.98)">4</text><text transform="translate(431.90,353.05) scale(1.0,0.98)">9</text><text transform="translate(436.30,351.30) scale(1.0,1.0)">.</text><text transform="translate(440.10,351.30) scale(0.9,0.76)">1</text><text transform="translate(91.40,365.75) scale(1.0,0.98)">7</text><text transform="translate(97.05,365.20) scale(1.25,1.12)">/</text><text transform="translate(102.10,364.00) scale(0.9,0.76)">1</text><text transform="translate(106.90,364.00) scale(0.95,0.76)">2</text><text transform="translate(112.55,365.20) scale(1.25,1.12)">/</text><text transform="translate(118.20,364.00) scale(0.95,0.76)">2</text><text transform="translate(123.60,364.00) scale(0.95,0.76)">0</text><text transform="translate(129.00,364.00) scale(0.95,0.76)">2</text><text transform="translate(134.40,364.00) scale(0.95,0.76)">0</text><text transform="translate(329.10,364.00) scale(0.95,0.76)">2</text><text transform="translate(334.50,365.75) scale(1.0,0.98)">9</text><text transform="translate(373.90,364.00) scale(0.9,0.76)">1</text><text transform="translate(377.70,364.00) scale(1.0,1.0)">.</text><text transform="translate(382.10,365.75) scale(1.0,0.98)">9</text><text transform="translate(387.50,365.75) scale(1.0,0.98)">9</text><text transform="translate(421.10,365.75) scale(1.0,0.98)">5</text><text transform="translate(426.50,365.75) scale(1.0,0.98)">7</text><text transform="translate(430.90,364.00) scale(1.0,1.0)">.</text><text transform="translate(435.30,365.75) scale(1.0,0.98)">7</text><text transform="translate(440.10,364.00) scale(0.9,0.76)">1</text><text transform="translate(90.20,378.55) scale(1.0,0.98)">7</text><text transform="translate(95.85,378.00) scale(1.25,1.12)">/</text><text transform="translate(101.50,376.80) scale(0.95,0.76)">2</text><text transform="translate(106.90,378.55) scale(1.0,0.98)">9</text><text transform="translate(112.55,378.00) scale(1.25,1.12)">/</text><text transform="translate(118.20,376.80) scale(0.95,0.76)">2</text><text transform="translate(123.60,376.80) scale(0.95,0.76)">0</text><text transform="translate(129.00,376.80) scale(0.95,0.76)">2</text><text transform="translate(134.40,376.80) scale(0.95,0.76)">0</text><text transform="translate(330.30,376.80) scale(0.92,0.95)">8</text><text transform="translate(335.10,376.80) scale(0.9,0.76)">1</text><text transform="translate(368.50,376.80) scale(0.9,0.76)">1</text><text transform="translate(373.30,378.55) scale(1.0,0.98)">9</text><text transform="translate(377.70,376.80) scale(1.0,1.0)">.</text><text transform="translate(382.10,378.55) scale(1.0,0.98)">9</text><text transform="translate(387.50,378.55) scale(1.0,0.98)">9</text><text transform="translate(409.20,376.80) scale(0.9,0.76)">1</text><text transform="translate(412.75,376.80) scale(1.0,1.0)">,</text><text transform="translate(416.90,376.80) scale(0.92,0.95)">6</text><text transform="translate(421.70,376.80) scale(0.9,0.76)">1</text><text transform="translate(426.50,378.55) scale(1.0,0.98)">9</text><text transform="translate(430.90,376.80) scale(1.0,1.0)">.</text><text transform="translate(434.70,376.80) scale(0.9,0.76)">1</text><text transform="translate(439.50,378.55) scale(1.0,0.98)">9</text><text transform="translate(91.40,389.50) scale(0.92,0.95)">8</text><text transform="translate(97.05,390.70) scale(1.25,1.12)">/</text><text transform="translate(102.10,389.50) scale(0.9,0.76)">1</text><text transform="translate(106.90,391.25) scale(1.0,0.98)">5</text><text transform="translate(112.55,390.70) scale(1.25,1.12)">/</text><text transform="translate(118.20,389.50) scale(0.95,0.76)">2</text><text transform="translate(123.60,389.50) scale(0.95,0.76)">0</text><text transform="translate(129.00,389.50) scale(0.95,0.76)">2</text><text transform="translate(134.40,389.50) scale(0.95,0.76)">0</text><text transform="translate(329.10,391.25) scale(1.0,0.98)">3</text><text transform="translate(334.50,391.25) scale(1.0,0.98)">5</text><text transform="translate(373.30,391.25) scale(1.0,0.98)">4</text><text transform="translate(377.70,389.50) scale(1.0,1.0)">.</text><text transform="translate(382.10,391.25) scale(1.0,0.98)">9</text><text transform="translate(387.50,391.25) scale(1.0,0.98)">9</text><text transform="translate(415.10,389.50) scale(0.9,0.76)">1</text><text transform="translate(419.90,391.25) scale(1.0,0.98)">7</text><text transform="translate(425.30,391.25) scale(1.0,0.98)">4</text><text transform="translate(429.70,389.50) scale(1.0,1.0)">.</text><text transform="translate(434.10,389.50) scale(0.92,0.95)">6</text><text transform="translate(439.50,391.25) scale(1.0,0.98)">5</text><text transform="translate(96.80,403.95) scale(1.0,0.98)">9</text><text transform="translate(102.45,403.40) scale(1.25,1.12)">/</text><text transform="translate(107.50,402.20) scale(0.9,0.76)">1</text><text transform="translate(112.55,403.40) scale(1.25,1.12)">/</text><text transform="translate(118.20,402.20) scale(0.95,0.76)">2</text><text transform="translate(123.60,402.20) scale(0.95,0.76)">0</text><text transform="translate(129.00,402.20) scale(0.95,0.76)">2</text><text transform="translate(134.40,402.20) scale(0.95,0.76)">0</text><text transform="translate(334.50,402.20) scale(0.95,0.76)">2</text><text transform="translate(377.30,402.20) scale(0.9,0.76)">1</text><text transform="translate(382.10,402.20) scale(0.95,0.76)">2</text><text transform="translate(387.50,403.95) scale(1.0,0.98)">5</text><text transform="translate(428.70,402.20) scale(0.95,0.76)">2</text><text transform="translate(434.10,403.95) scale(1.0,0.98)">5</text><text transform="translate(439.50,402.20) scale(0.95,0.76)">0</text><text transform="translate(91.40,416.65) scale(1.0,0.98)">9</text><text transform="translate(97.05,416.10) scale(1.25,1.12)">/</text><text transform="translate(102.10,414.90) scale(0.9,0.76)">1</text><text transform="translate(106.90,414.90) scale(0.92,0.95)">8</text><text transform="translate(112.55,416.10) scale(1.25,1.12)">/</text><text transform="translate(118.20,414.90) scale(0.95,0.76)">2</text><text transform="translate(123.60,414.90) scale(0.95,0.76)">0</text><text transform="translate(129.00,414.90) scale(0.95,0.76)">2</text><text transform="translate(134.40,414.90) scale(0.95,0.76)">0</text><text transform="translate(329.70,414.90) scale(0.9,0.76)">1</text><text transform="translate(334.50,414.90) scale(0.92,0.95)">6</text><text transform="translate(368.50,414.90) scale(0.9,0.76)">1</text><text transform="translate(373.30,416.65) scale(1.0,0.98)">5</text><text transform="translate(377.70,414.90) scale(1.0,1.0)">.</text><text transform="translate(382.10,416.65) scale(1.0,0.98)">9</text><text transform="translate(387.50,416.65) scale(1.0,0.98)">9</text><text transform="translate(414.50,414.90) scale(0.95,0.76)">2</text><text transform="translate(419.90,416.65) scale(1.0,0.98)">5</text><text transform="translate(425.30,416.65) scale(1.0,0.98)">5</text><text transform="translate(429.70,414.90) scale(1.0,1.0)">.</text><text transform="translate(434.10,414.90) scale(0.92,0.95)">8</text><text transform="translate(439.50,416.65) scale(1.0,0.98)">4</text><text transform="translate(90.80,427.60) scale(0.9,0.76)">1</text><text transform="translate(95.60,427.60) scale(0.95,0.76)">0</text><text transform="translate(101.25,428.80) scale(1.25,1.12)">/</text><text transform="translate(106.90,429.35) scale(1.0,0.98)">5</text><text transform="translate(112.55,428.80) scale(1.25,1.12)">/</text><text transform="translate(118.20,427.60) scale(0.95,0.76)">2</text><text transform="translate(123.60,427.60) scale(0.95,0.76)">0</text><text transform="translate(129.00,427.60) scale(0.95,0.76)">2</text><text transform="translate(134.40,427.60) scale(0.95,0.76)">0</text><text transform="translate(329.10,427.60) scale(0.95,0.76)">2</text><text transform="translate(334.50,427.60) scale(0.92,0.95)">8</text><text transform="translate(373.30,427.60) scale(0.92,0.95)">8</text><text transform="translate(377.70,427.60) scale(1.0,1.0)">.</text><text transform="translate(382.10,429.35) scale(1.0,0.98)">9</text><text transform="translate(387.50,429.35) scale(1.0,0.98)">9</text><text transform="translate(415.70,427.60) scale(0.95,0.76)">2</text><text transform="translate(421.10,429.35) scale(1.0,0.98)">5</text><text transform="translate(425.90,427.60) scale(0.9,0.76)">1</text><text transform="translate(429.70,427.60) scale(1.0,1.0)">.</text><text transform="translate(434.10,429.35) scale(1.0,0.98)">7</text><text transform="translate(439.50,427.60) scale(0.95,0.76)">2</text><text transform="translate(85.40,440.30) scale(0.9,0.76)">1</text><text transform="translate(90.20,440.30) scale(0.95,0.76)">0</text><text transform="translate(95.85,441.50) scale(1.25,1.12)">/</text><text transform="translate(101.50,440.30) scale(0.95,0.76)">2</text><text transform="translate(106.90,440.30) scale(0.95,0.76)">2</text><text transform="translate(112.55,441.50) scale(1.25,1.12)">/</text><text transform="translate(118.20,440.30) scale(0.95,0.76)">2</text><text transform="translate(123.60,440.30) scale(0.95,0.76)">0</text><text transform="translate(129.00,440.30) scale(0.95,0.76)">2</text><text transform="translate(134.40,440.30) scale(0.95,0.76)">0</text><text transform="translate(329.10,440.30) scale(0.92,0.95)">6</text><text transform="translate(334.50,442.05) scale(1.0,0.98)">4</text><text transform="translate(373.30,440.30) scale(0.92,0.95)">8</text><text transform="translate(377.70,440.30) scale(1.0,1.0)">.</text><text transform="translate(382.10,442.05) scale(1.0,0.98)">9</text><text transform="translate(387.50,442.05) scale(1.0,0.98)">9</text><text transform="translate(414.50,442.05) scale(1.0,0.98)">5</text><text transform="translate(419.90,442.05) scale(1.0,0.98)">7</text><text transform="translate(425.30,442.05) scale(1.0,0.98)">5</text><text transform="translate(429.70,440.30) scale(1.0,1.0)">.</text><text transform="translate(434.10,442.05) scale(1.0,0.98)">3</text><text transform="translate(439.50,440.30) scale(0.92,0.95)">6</text><text transform="translate(92.00,453.00) scale(0.9,0.76)">1</text><text transform="translate(96.20,453.00) scale(0.9,0.76)">1</text><text transform="translate(101.25,454.20) scale(1.25,1.12)">/</text><text transform="translate(106.90,453.00) scale(0.92,0.95)">8</text><text transform="translate(112.55,454.20) scale(1.25,1.12)">/</text><text transform="translate(118.20,453.00) scale(0.95,0.76)">2</text><text transform="translate(123.60,453.00) scale(0.95,0.76)">0</text><text transform="translate(129.00,453.00) scale(0.95,0.76)">2</text><text transform="translate(134.40,453.00) scale(0.95,0.76)">0</text><text transform="translate(329.70,453.00) scale(0.9,0.76)">1</text><text transform="translate(334.50,454.75) scale(1.0,0.98)">5</text><text transform="translate(368.50,453.00) scale(0.9,0.76)">1</text><text transform="translate(373.30,454.75) scale(1.0,0.98)">9</text><text transform="translate(377.70,453.00) scale(1.0,1.0)">.</text><text transform="translate(382.10,454.75) scale(1.0,0.98)">9</text><text transform="translate(387.50,454.75) scale(1.0,0.98)">9</text><text transform="translate(414.50,453.00) scale(0.95,0.76)">2</text><text transform="translate(419.90,454.75) scale(1.0,0.98)">9</text><text transform="translate(425.30,454.75) scale(1.0,0.98)">9</text><text transform="translate(429.70,453.00) scale(1.0,1.0)">.</text><text transform="translate(434.10,453.00) scale(0.92,0.95)">8</text><text transform="translate(439.50,454.75) scale(1.0,0.98)">5</text></g>
<line x1="62.8" y1="173.6" x2="444.20000000000005" y2="173.6" stroke="#8585ff" stroke-width="1.1"/>
<line x1="62.8" y1="188.5" x2="444.20000000000005" y2="188.5" stroke="#8585ff" stroke-width="1.1"/>
<line x1="62.8" y1="201" x2="444.20000000000005" y2="201" stroke="#8585ff" stroke-width="1.1"/>
<line x1="62.8" y1="213.7" x2="444.20000000000005" y2="213.7" stroke="#8585ff" stroke-width="1.1"/>
<line x1="62.8" y1="226.5" x2="444.20000000000005" y2="226.5" stroke="#8585ff" stroke-width="1.1"/>
<line x1="62.8" y1="239" x2="444.20000000000005" y2="239" stroke="#8585ff" stroke-width="1.1"/>
<line x1="62.8" y1="251.7" x2="444.20000000000005" y2="251.7" stroke="#8585ff" stroke-width="1.1"/>
<line x1="62.8" y1="264.4" x2="444.20000000000005" y2="264.4" stroke="#8585ff" stroke-width="1.1"/>
<line x1="62.8" y1="289.6" x2="444.20000000000005" y2="289.6" stroke="#8585ff" stroke-width="1.1"/>
<line x1="62.8" y1="302.5" x2="444.20000000000005" y2="302.5" stroke="#8585ff" stroke-width="1.1"/>
<line x1="62.8" y1="328" x2="444.20000000000005" y2="328" stroke="#8585ff" stroke-width="1.1"/>
<line x1="62.8" y1="340.6" x2="444.20000000000005" y2="340.6" stroke="#8585ff" stroke-width="1.1"/>
<line x1="62.8" y1="353.3" x2="444.20000000000005" y2="353.3" stroke="#8585ff" stroke-width="1.1"/>
<line x1="62.8" y1="366" x2="444.20000000000005" y2="366" stroke="#8585ff" stroke-width="1.1"/>
<line x1="62.8" y1="378.8" x2="444.20000000000005" y2="378.8" stroke="#8585ff" stroke-width="1.1"/>
<line x1="62.8" y1="391.5" x2="444.20000000000005" y2="391.5" stroke="#8585ff" stroke-width="1.1"/>
<line x1="62.8" y1="404.2" x2="444.20000000000005" y2="404.2" stroke="#8585ff" stroke-width="1.1"/>
<line x1="62.8" y1="416.9" x2="444.20000000000005" y2="416.9" stroke="#8585ff" stroke-width="1.1"/>
<line x1="62.8" y1="429.6" x2="444.20000000000005" y2="429.6" stroke="#8585ff" stroke-width="1.1"/>
<line x1="62.8" y1="442.3" x2="444.20000000000005" y2="442.3" stroke="#8585ff" stroke-width="1.1"/>
<line x1="62.8" y1="455" x2="444.20000000000005" y2="455" stroke="#8585ff" stroke-width="1.1"/>
<line x1="62.8" y1="173.6" x2="62.8" y2="455" stroke="#8585ff" stroke-width="1.1"/>
<line x1="138.5" y1="173.6" x2="138.5" y2="455" stroke="#8585ff" stroke-width="1.1"/>
<line x1="179.5" y1="173.6" x2="179.5" y2="455" stroke="#8585ff" stroke-width="1.1"/>
<line x1="257.5" y1="173.6" x2="257.5" y2="455" stroke="#8585ff" stroke-width="1.1"/>
<line x1="298.5" y1="173.6" x2="298.5" y2="455" stroke="#8585ff" stroke-width="1.1"/>
<line x1="338.6" y1="173.6" x2="338.6" y2="455" stroke="#8585ff" stroke-width="1.1"/>
<line x1="391.6" y1="173.6" x2="391.6" y2="455" stroke="#8585ff" stroke-width="1.1"/>
<line x1="443.6" y1="173.6" x2="443.6" y2="455" stroke="#8585ff" stroke-width="1.1"/>
<rect x="21.9" y="146.2" width="41.2" height="12.6" fill="none" stroke="#217346" stroke-width="1.6"/>
<rect x="62" y="157.7" width="2.6" height="2.6" fill="#217346"/>
<rect x="483.8" y="264.2" width="41.6" height="25.6" fill="none" stroke="#a040b8" stroke-width="1.4"/>
<circle cx="525.8" cy="264.2" r="6.4" fill="#8a1a9e"/>
<text x="525.80" y="266.40" font-family="Liberation Sans" font-size="5.6" fill="#ffffff" font-weight="bold" text-anchor="middle" textLength="8.40" lengthAdjust="spacingAndGlyphs">MR</text>
<rect x="1014" y="146" width="10" height="309" fill="#ffffff"/>
<rect x="1015.4" y="262" width="8.6" height="193" fill="#e3e3e3"/>
<line x1="1015.5" y1="146" x2="1015.5" y2="262" stroke="#e4e4e4" stroke-width="1"/>
<path d="M1017.1 152.9 L1019.6 149.9 L1022.1 152.9 Z" stroke="none" fill="#666666" stroke-width="1"/>
<line x1="1015.5" y1="157.2" x2="1024" y2="157.2" stroke="#e4e4e4" stroke-width="1"/></svg>
</body></html>
